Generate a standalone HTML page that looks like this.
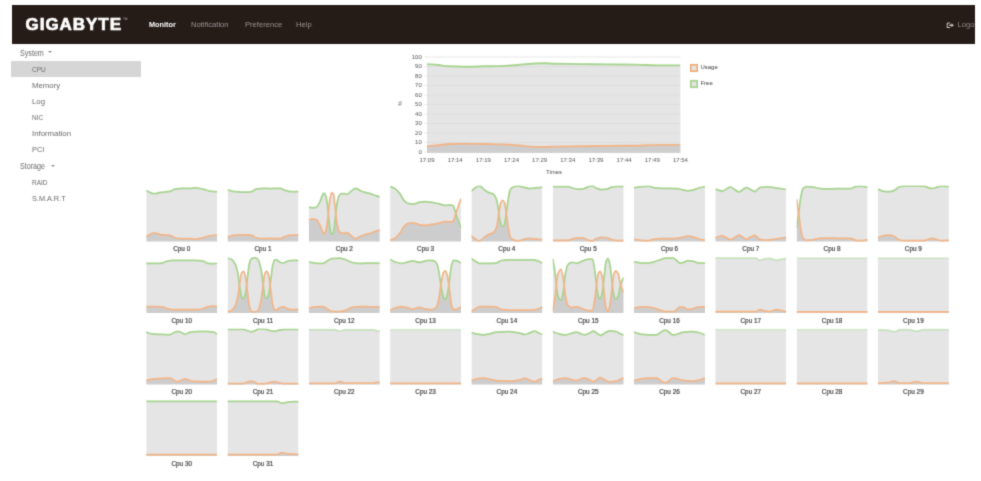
<!DOCTYPE html>
<html><head><meta charset="utf-8">
<style>
html,body{margin:0;padding:0;background:#fff;width:981px;height:481px;overflow:hidden;font-family:"Liberation Sans",sans-serif;}
#hdr{position:absolute;left:12px;top:5px;width:963px;height:39px;background:#251b17;overflow:hidden;}
#logo{position:absolute;left:13.6px;top:9.4px;font-weight:bold;font-size:17px;color:#fff;letter-spacing:0.95px;line-height:22px;-webkit-text-stroke:0.7px #fff;}
#tm{position:absolute;left:110.8px;top:12.2px;font-size:5px;color:#bbb;line-height:5px;}
.nav{position:absolute;top:15.2px;font-size:7.6px;color:#9b9593;line-height:10px;white-space:nowrap;}
.side{position:absolute;font-size:7.8px;color:#6a6a6a;line-height:10px;white-space:nowrap;}
.cat{font-size:8.3px;transform:scaleX(0.86);transform-origin:0 0;}
.arr{position:absolute;width:0;height:0;border-left:2.8px solid transparent;border-right:2.8px solid transparent;border-top:2.6px solid #8c8c8c;}
#sel{position:absolute;left:11px;top:61px;width:130px;height:16px;background:#d6d6d6;}
svg{position:absolute;left:0;top:0;}
#wrap{position:absolute;left:0;top:0;width:981px;height:481px;filter:url(#soft);background:#fff;}
.cl{font-size:6.4px;fill:#4a4a4a;stroke:#4a4a4a;stroke-width:0.22px;}
.al{font-size:6px;fill:#666;stroke:#666;stroke-width:0.05px;}
</style></head><body><svg width="0" height="0" style="position:absolute;left:0;top:0"><filter id="soft" x="0" y="0" width="100%" height="100%" color-interpolation-filters="sRGB"><feConvolveMatrix order="3" kernelMatrix="9 42 9 42 196 42 9 42 9" divisor="400" edgeMode="duplicate"/></filter></svg><div id="wrap">
<div id="hdr">
 <div id="logo">GIGABYTE</div><div id="tm">&#8482;</div>
 <div class="nav" style="left:137px;color:#fff;font-weight:bold;font-size:7.3px">Monitor</div>
 <div class="nav" style="left:179px">Notification</div>
 <div class="nav" style="left:233px">Preference</div>
 <div class="nav" style="left:284px">Help</div>
 <svg style="position:absolute;left:933.5px;top:16.5px" width="9" height="6.5" viewBox="0 0 10 8"><path d="M1,1.2 H4.5 M1,1.2 V6.8 H4.5" stroke="#c4c0be" stroke-width="1.3" fill="none"/><path d="M3.5,3.2 H6.2 V1.6 L9.2,4 L6.2,6.4 V4.8 H3.5 Z" fill="#c4c0be"/></svg>
 <div class="nav" style="top:15px;left:945.5px;color:#8f8a88;white-space:nowrap">Logout</div>
</div>
<div id="sel"></div>
<div class="side cat" style="left:19.8px;top:48.2px">System</div><div class="arr" style="left:48.3px;top:51px"></div>
<div class="side" style="left:32px;top:65.3px;font-size:8.1px;transform:scaleX(0.8);transform-origin:0 0">CPU</div>
<div class="side" style="left:32px;top:81.3px">Memory</div>
<div class="side" style="left:32px;top:97.3px">Log</div>
<div class="side" style="left:32px;top:113.3px;font-size:8.1px;transform:scaleX(0.8);transform-origin:0 0">NIC</div>
<div class="side" style="left:32px;top:129.3px">Information</div>
<div class="side" style="left:32px;top:145.3px;font-size:8.1px;transform:scaleX(0.92);transform-origin:0 0">PCI</div>
<div class="side cat" style="left:19.8px;top:161.2px">Storage</div><div class="arr" style="left:50.6px;top:164.5px"></div>
<div class="side" style="left:32px;top:178.3px;font-size:8.1px;transform:scaleX(0.8);transform-origin:0 0">RAID</div>
<div class="side" style="left:32px;top:194.3px;font-size:8.1px;transform:scaleX(0.9);transform-origin:0 0">S.M.A.R.T</div>
<svg width="981" height="481" viewBox="0 0 981 481" style="font-family:'Liberation Sans',sans-serif">
<path d="M427.00,64.10 C430.73,64.40 434.47,64.64 438.20,65.00 C441.73,65.34 445.27,66.15 448.80,66.30 C454.10,66.52 459.40,66.70 464.70,66.70 C471.33,66.70 477.97,66.43 484.60,66.30 C491.23,66.17 497.87,66.11 504.50,65.90 C508.90,65.76 513.30,65.35 517.70,65.00 C522.13,64.64 526.57,63.91 531.00,63.70 C535.40,63.50 539.80,63.30 544.20,63.30 C547.80,63.30 551.40,63.62 555.00,63.70 C563.83,63.89 572.67,63.99 581.50,64.10 C590.33,64.21 599.17,64.32 608.00,64.40 C616.83,64.48 625.67,64.49 634.50,64.60 C643.33,64.71 652.17,65.40 661.00,65.40 C667.47,65.40 673.93,65.40 680.40,65.40 L680.40,153.00 L427.00,153.00 Z" fill="#000" fill-opacity="0.1"/>
<path d="M427.00,146.20 C430.73,145.90 434.47,145.66 438.20,145.30 C441.73,144.96 445.27,144.15 448.80,144.00 C454.10,143.78 459.40,143.60 464.70,143.60 C471.33,143.60 477.97,143.87 484.60,144.00 C491.23,144.13 497.87,144.19 504.50,144.40 C508.90,144.54 513.30,144.95 517.70,145.30 C522.13,145.66 526.57,146.39 531.00,146.60 C535.40,146.80 539.80,147.00 544.20,147.00 C547.80,147.00 551.40,146.68 555.00,146.60 C563.83,146.41 572.67,146.31 581.50,146.20 C590.33,146.09 599.17,145.98 608.00,145.90 C616.83,145.82 625.67,145.81 634.50,145.70 C643.33,145.59 652.17,144.90 661.00,144.90 C667.47,144.90 673.93,144.90 680.40,144.90 L680.40,153.00 L427.00,153.00 Z" fill="#000" fill-opacity="0.1"/>
<line x1="427.0" x2="680.4" y1="152.00" y2="152.00" stroke="#d9d9d9" stroke-opacity="0.8" stroke-width="0.8"/>
<line x1="424.0" x2="427.0" y1="152.00" y2="152.00" stroke="#e6e6e6" stroke-width="0.8"/>
<text x="421.8" y="153.80" text-anchor="end" class="al">0</text>
<line x1="427.0" x2="680.4" y1="142.50" y2="142.50" stroke="#d9d9d9" stroke-opacity="0.8" stroke-width="0.8"/>
<line x1="424.0" x2="427.0" y1="142.50" y2="142.50" stroke="#e6e6e6" stroke-width="0.8"/>
<text x="421.8" y="144.30" text-anchor="end" class="al">10</text>
<line x1="427.0" x2="680.4" y1="133.00" y2="133.00" stroke="#d9d9d9" stroke-opacity="0.8" stroke-width="0.8"/>
<line x1="424.0" x2="427.0" y1="133.00" y2="133.00" stroke="#e6e6e6" stroke-width="0.8"/>
<text x="421.8" y="134.80" text-anchor="end" class="al">20</text>
<line x1="427.0" x2="680.4" y1="123.50" y2="123.50" stroke="#d9d9d9" stroke-opacity="0.8" stroke-width="0.8"/>
<line x1="424.0" x2="427.0" y1="123.50" y2="123.50" stroke="#e6e6e6" stroke-width="0.8"/>
<text x="421.8" y="125.30" text-anchor="end" class="al">30</text>
<line x1="427.0" x2="680.4" y1="114.00" y2="114.00" stroke="#d9d9d9" stroke-opacity="0.8" stroke-width="0.8"/>
<line x1="424.0" x2="427.0" y1="114.00" y2="114.00" stroke="#e6e6e6" stroke-width="0.8"/>
<text x="421.8" y="115.80" text-anchor="end" class="al">40</text>
<line x1="427.0" x2="680.4" y1="104.50" y2="104.50" stroke="#d9d9d9" stroke-opacity="0.8" stroke-width="0.8"/>
<line x1="424.0" x2="427.0" y1="104.50" y2="104.50" stroke="#e6e6e6" stroke-width="0.8"/>
<text x="421.8" y="106.30" text-anchor="end" class="al">50</text>
<line x1="427.0" x2="680.4" y1="95.00" y2="95.00" stroke="#d9d9d9" stroke-opacity="0.8" stroke-width="0.8"/>
<line x1="424.0" x2="427.0" y1="95.00" y2="95.00" stroke="#e6e6e6" stroke-width="0.8"/>
<text x="421.8" y="96.80" text-anchor="end" class="al">60</text>
<line x1="427.0" x2="680.4" y1="85.50" y2="85.50" stroke="#d9d9d9" stroke-opacity="0.8" stroke-width="0.8"/>
<line x1="424.0" x2="427.0" y1="85.50" y2="85.50" stroke="#e6e6e6" stroke-width="0.8"/>
<text x="421.8" y="87.30" text-anchor="end" class="al">70</text>
<line x1="427.0" x2="680.4" y1="76.00" y2="76.00" stroke="#d9d9d9" stroke-opacity="0.8" stroke-width="0.8"/>
<line x1="424.0" x2="427.0" y1="76.00" y2="76.00" stroke="#e6e6e6" stroke-width="0.8"/>
<text x="421.8" y="77.80" text-anchor="end" class="al">80</text>
<line x1="427.0" x2="680.4" y1="66.50" y2="66.50" stroke="#d9d9d9" stroke-opacity="0.8" stroke-width="0.8"/>
<line x1="424.0" x2="427.0" y1="66.50" y2="66.50" stroke="#e6e6e6" stroke-width="0.8"/>
<text x="421.8" y="68.30" text-anchor="end" class="al">90</text>
<line x1="427.0" x2="680.4" y1="57.00" y2="57.00" stroke="#d9d9d9" stroke-opacity="0.8" stroke-width="0.8"/>
<line x1="424.0" x2="427.0" y1="57.00" y2="57.00" stroke="#e6e6e6" stroke-width="0.8"/>
<text x="421.8" y="58.80" text-anchor="end" class="al">100</text>
<text x="427.00" y="161.8" text-anchor="middle" class="al">17:09</text>
<text x="455.16" y="161.8" text-anchor="middle" class="al">17:14</text>
<text x="483.31" y="161.8" text-anchor="middle" class="al">17:19</text>
<text x="511.47" y="161.8" text-anchor="middle" class="al">17:24</text>
<text x="539.62" y="161.8" text-anchor="middle" class="al">17:29</text>
<text x="567.78" y="161.8" text-anchor="middle" class="al">17:34</text>
<text x="595.93" y="161.8" text-anchor="middle" class="al">17:39</text>
<text x="624.09" y="161.8" text-anchor="middle" class="al">17:44</text>
<text x="652.24" y="161.8" text-anchor="middle" class="al">17:49</text>
<text x="680.40" y="161.8" text-anchor="middle" class="al">17:54</text>
<clipPath id="bigc"><rect x="427.00" y="54.00" width="253.40" height="102.00"/></clipPath>
<g clip-path="url(#bigc)"><path d="M427.00,64.10 C430.73,64.40 434.47,64.64 438.20,65.00 C441.73,65.34 445.27,66.15 448.80,66.30 C454.10,66.52 459.40,66.70 464.70,66.70 C471.33,66.70 477.97,66.43 484.60,66.30 C491.23,66.17 497.87,66.11 504.50,65.90 C508.90,65.76 513.30,65.35 517.70,65.00 C522.13,64.64 526.57,63.91 531.00,63.70 C535.40,63.50 539.80,63.30 544.20,63.30 C547.80,63.30 551.40,63.62 555.00,63.70 C563.83,63.89 572.67,63.99 581.50,64.10 C590.33,64.21 599.17,64.32 608.00,64.40 C616.83,64.48 625.67,64.49 634.50,64.60 C643.33,64.71 652.17,65.40 661.00,65.40 C667.47,65.40 673.93,65.40 680.40,65.40" fill="none" stroke="#a6d48f" stroke-width="1.9"/>
<path d="M427.00,146.20 C430.73,145.90 434.47,145.66 438.20,145.30 C441.73,144.96 445.27,144.15 448.80,144.00 C454.10,143.78 459.40,143.60 464.70,143.60 C471.33,143.60 477.97,143.87 484.60,144.00 C491.23,144.13 497.87,144.19 504.50,144.40 C508.90,144.54 513.30,144.95 517.70,145.30 C522.13,145.66 526.57,146.39 531.00,146.60 C535.40,146.80 539.80,147.00 544.20,147.00 C547.80,147.00 551.40,146.68 555.00,146.60 C563.83,146.41 572.67,146.31 581.50,146.20 C590.33,146.09 599.17,145.98 608.00,145.90 C616.83,145.82 625.67,145.81 634.50,145.70 C643.33,145.59 652.17,144.90 661.00,144.90 C667.47,144.90 673.93,144.90 680.40,144.90" fill="none" stroke="#f2b588" stroke-width="1.9"/></g>
<text x="554" y="174" text-anchor="middle" class="al">Times</text>
<text x="0" y="0" text-anchor="middle" class="al" style="font-size:5px" transform="translate(402.2,103.3) rotate(-90)">%</text>
<rect x="690.8" y="64.8" width="6.4" height="6.4" fill="#e4e4e4" stroke="#f0a874" stroke-width="1.6"/>
<text x="700.4" y="69.4" class="al" style="fill:#555">Usage</text>
<rect x="690.8" y="80.8" width="6.4" height="6.4" fill="#e4e4e4" stroke="#a6d48f" stroke-width="1.75"/>
<text x="700.4" y="85.4" class="al" style="fill:#555">Free</text>
<clipPath id="c0"><rect x="146.20" y="185.50" width="71.00" height="57.40"/></clipPath>
<g clip-path="url(#c0)">
<path d="M146.20,190.44 C148.60,191.52 151.00,193.66 153.40,193.66 C154.56,193.66 155.72,193.54 156.88,193.41 C158.08,193.26 159.29,192.54 160.49,192.37 C162.85,192.05 165.21,192.02 167.57,191.73 C168.73,191.59 169.89,191.41 171.05,191.09 C172.25,190.76 173.46,189.40 174.66,189.15 C177.02,188.67 179.38,188.25 181.74,188.25 C184.10,188.25 186.47,188.25 188.83,188.25 C191.19,188.25 193.55,187.87 195.91,187.87 C198.27,187.87 200.64,188.64 203.00,189.15 C205.32,189.66 207.63,190.77 209.95,191.09 C212.37,191.41 214.78,191.52 217.20,191.73 L217.20,241.40 L146.20,241.40 Z" fill="#000" fill-opacity="0.1"/>
<path d="M146.20,236.46 C148.60,235.38 151.00,233.24 153.40,233.24 C154.56,233.24 155.72,233.36 156.88,233.49 C158.08,233.64 159.29,234.36 160.49,234.53 C162.85,234.85 165.21,234.88 167.57,235.17 C168.73,235.31 169.89,235.49 171.05,235.81 C172.25,236.14 173.46,237.50 174.66,237.75 C177.02,238.23 179.38,238.65 181.74,238.65 C184.10,238.65 186.47,238.65 188.83,238.65 C191.19,238.65 193.55,239.03 195.91,239.03 C198.27,239.03 200.64,238.26 203.00,237.75 C205.32,237.24 207.63,236.13 209.95,235.81 C212.37,235.49 214.78,235.38 217.20,235.17 L217.20,241.40 L146.20,241.40 Z" fill="#000" fill-opacity="0.1"/>
<path d="M146.20,190.44 C148.60,191.52 151.00,193.66 153.40,193.66 C154.56,193.66 155.72,193.54 156.88,193.41 C158.08,193.26 159.29,192.54 160.49,192.37 C162.85,192.05 165.21,192.02 167.57,191.73 C168.73,191.59 169.89,191.41 171.05,191.09 C172.25,190.76 173.46,189.40 174.66,189.15 C177.02,188.67 179.38,188.25 181.74,188.25 C184.10,188.25 186.47,188.25 188.83,188.25 C191.19,188.25 193.55,187.87 195.91,187.87 C198.27,187.87 200.64,188.64 203.00,189.15 C205.32,189.66 207.63,190.77 209.95,191.09 C212.37,191.41 214.78,191.52 217.20,191.73" fill="none" stroke="#a6d48f" stroke-width="1.75" stroke-opacity="1.00"/>
<path d="M146.20,236.46 C148.60,235.38 151.00,233.24 153.40,233.24 C154.56,233.24 155.72,233.36 156.88,233.49 C158.08,233.64 159.29,234.36 160.49,234.53 C162.85,234.85 165.21,234.88 167.57,235.17 C168.73,235.31 169.89,235.49 171.05,235.81 C172.25,236.14 173.46,237.50 174.66,237.75 C177.02,238.23 179.38,238.65 181.74,238.65 C184.10,238.65 186.47,238.65 188.83,238.65 C191.19,238.65 193.55,239.03 195.91,239.03 C198.27,239.03 200.64,238.26 203.00,237.75 C205.32,237.24 207.63,236.13 209.95,235.81 C212.37,235.49 214.78,235.38 217.20,235.17" fill="none" stroke="#f2b588" stroke-width="1.75"/>
</g>
<text x="181.7" y="251.0" text-anchor="middle" class="cl">Cpu 0</text>
<clipPath id="c1"><rect x="227.50" y="185.50" width="71.00" height="57.40"/></clipPath>
<g clip-path="url(#c1)">
<path d="M227.50,189.80 C229.89,190.44 232.27,191.51 234.66,191.73 C237.02,191.94 239.38,192.12 241.75,192.12 C244.11,192.12 246.47,192.12 248.83,192.12 C249.99,192.12 251.15,191.72 252.31,191.34 C253.51,190.95 254.71,189.41 255.92,189.15 C258.28,188.66 260.64,188.25 263.00,188.25 C265.36,188.25 267.72,188.51 270.08,188.51 C272.45,188.51 274.81,188.25 277.17,188.25 C278.33,188.25 279.49,188.25 280.65,188.25 C281.85,188.25 283.05,189.67 284.25,190.06 C286.62,190.81 288.98,191.73 291.34,191.73 C293.73,191.73 296.11,191.73 298.50,191.73 L298.50,241.40 L227.50,241.40 Z" fill="#000" fill-opacity="0.1"/>
<path d="M227.50,237.10 C229.89,236.46 232.27,235.39 234.66,235.17 C237.02,234.96 239.38,234.78 241.75,234.78 C244.11,234.78 246.47,234.78 248.83,234.78 C249.99,234.78 251.15,235.18 252.31,235.56 C253.51,235.95 254.71,237.49 255.92,237.75 C258.28,238.24 260.64,238.65 263.00,238.65 C265.36,238.65 267.72,238.39 270.08,238.39 C272.45,238.39 274.81,238.65 277.17,238.65 C278.33,238.65 279.49,238.65 280.65,238.65 C281.85,238.65 283.05,237.23 284.25,236.84 C286.62,236.09 288.98,235.17 291.34,235.17 C293.73,235.17 296.11,235.17 298.50,235.17 L298.50,241.40 L227.50,241.40 Z" fill="#000" fill-opacity="0.1"/>
<path d="M227.50,189.80 C229.89,190.44 232.27,191.51 234.66,191.73 C237.02,191.94 239.38,192.12 241.75,192.12 C244.11,192.12 246.47,192.12 248.83,192.12 C249.99,192.12 251.15,191.72 252.31,191.34 C253.51,190.95 254.71,189.41 255.92,189.15 C258.28,188.66 260.64,188.25 263.00,188.25 C265.36,188.25 267.72,188.51 270.08,188.51 C272.45,188.51 274.81,188.25 277.17,188.25 C278.33,188.25 279.49,188.25 280.65,188.25 C281.85,188.25 283.05,189.67 284.25,190.06 C286.62,190.81 288.98,191.73 291.34,191.73 C293.73,191.73 296.11,191.73 298.50,191.73" fill="none" stroke="#a6d48f" stroke-width="1.75" stroke-opacity="1.00"/>
<path d="M227.50,237.10 C229.89,236.46 232.27,235.39 234.66,235.17 C237.02,234.96 239.38,234.78 241.75,234.78 C244.11,234.78 246.47,234.78 248.83,234.78 C249.99,234.78 251.15,235.18 252.31,235.56 C253.51,235.95 254.71,237.49 255.92,237.75 C258.28,238.24 260.64,238.65 263.00,238.65 C265.36,238.65 267.72,238.39 270.08,238.39 C272.45,238.39 274.81,238.65 277.17,238.65 C278.33,238.65 279.49,238.65 280.65,238.65 C281.85,238.65 283.05,237.23 284.25,236.84 C286.62,236.09 288.98,235.17 291.34,235.17 C293.73,235.17 296.11,235.17 298.50,235.17" fill="none" stroke="#f2b588" stroke-width="1.75"/>
</g>
<text x="263.0" y="251.0" text-anchor="middle" class="cl">Cpu 1</text>
<clipPath id="c2"><rect x="308.80" y="185.50" width="71.00" height="57.40"/></clipPath>
<g clip-path="url(#c2)">
<path d="M308.80,207.19 C310.01,207.40 311.23,207.83 312.44,207.83 C313.73,207.83 315.02,207.57 316.31,207.19 C317.38,206.87 318.45,204.61 319.53,202.68 C320.38,201.14 321.24,197.96 322.10,196.24 C322.75,194.95 323.39,193.02 324.03,193.02 C324.68,193.02 325.32,194.52 325.97,196.24 C326.61,197.96 327.25,204.11 327.90,209.12 C328.54,214.13 329.19,223.76 329.83,227.15 C330.47,230.55 331.12,234.24 331.76,234.24 C332.32,234.24 332.88,233.73 333.44,232.95 C333.95,232.23 334.47,224.98 334.98,220.71 C335.63,215.38 336.27,207.49 336.92,203.97 C337.56,200.44 338.20,197.27 338.85,196.24 C339.71,194.86 340.56,193.66 341.42,193.66 C342.50,193.66 343.57,193.66 344.64,193.66 C345.50,193.66 346.36,194.31 347.22,194.31 C348.51,194.31 349.80,192.01 351.08,191.09 C352.59,190.01 354.09,188.25 355.59,188.25 C357.10,188.25 358.60,189.81 360.10,190.44 C361.82,191.17 363.54,191.86 365.25,192.37 C366.97,192.89 368.69,193.15 370.41,193.66 C372.12,194.18 373.84,195.02 375.56,195.59 C376.97,196.07 378.39,196.45 379.80,196.88 L379.80,241.40 L308.80,241.40 Z" fill="#000" fill-opacity="0.1"/>
<path d="M308.80,219.71 C310.01,219.50 311.23,219.07 312.44,219.07 C313.73,219.07 315.02,219.33 316.31,219.71 C317.38,220.03 318.45,222.29 319.53,224.22 C320.38,225.76 321.24,228.94 322.10,230.66 C322.75,231.95 323.39,233.88 324.03,233.88 C324.68,233.88 325.32,232.38 325.97,230.66 C326.61,228.94 327.25,222.79 327.90,217.78 C328.54,212.77 329.19,203.14 329.83,199.75 C330.47,196.35 331.12,192.66 331.76,192.66 C332.32,192.66 332.88,193.17 333.44,193.95 C333.95,194.67 334.47,201.92 334.98,206.19 C335.63,211.52 336.27,219.41 336.92,222.93 C337.56,226.46 338.20,229.63 338.85,230.66 C339.71,232.04 340.56,233.24 341.42,233.24 C342.50,233.24 343.57,233.24 344.64,233.24 C345.50,233.24 346.36,232.59 347.22,232.59 C348.51,232.59 349.80,234.89 351.08,235.81 C352.59,236.89 354.09,238.65 355.59,238.65 C357.10,238.65 358.60,237.09 360.10,236.46 C361.82,235.73 363.54,235.04 365.25,234.53 C366.97,234.01 368.69,233.75 370.41,233.24 C372.12,232.72 373.84,231.88 375.56,231.31 C376.97,230.83 378.39,230.45 379.80,230.02 L379.80,241.40 L308.80,241.40 Z" fill="#000" fill-opacity="0.1"/>
<path d="M308.80,207.19 C310.01,207.40 311.23,207.83 312.44,207.83 C313.73,207.83 315.02,207.57 316.31,207.19 C317.38,206.87 318.45,204.61 319.53,202.68 C320.38,201.14 321.24,197.96 322.10,196.24 C322.75,194.95 323.39,193.02 324.03,193.02 C324.68,193.02 325.32,194.52 325.97,196.24 C326.61,197.96 327.25,204.11 327.90,209.12 C328.54,214.13 329.19,223.76 329.83,227.15 C330.47,230.55 331.12,234.24 331.76,234.24 C332.32,234.24 332.88,233.73 333.44,232.95 C333.95,232.23 334.47,224.98 334.98,220.71 C335.63,215.38 336.27,207.49 336.92,203.97 C337.56,200.44 338.20,197.27 338.85,196.24 C339.71,194.86 340.56,193.66 341.42,193.66 C342.50,193.66 343.57,193.66 344.64,193.66 C345.50,193.66 346.36,194.31 347.22,194.31 C348.51,194.31 349.80,192.01 351.08,191.09 C352.59,190.01 354.09,188.25 355.59,188.25 C357.10,188.25 358.60,189.81 360.10,190.44 C361.82,191.17 363.54,191.86 365.25,192.37 C366.97,192.89 368.69,193.15 370.41,193.66 C372.12,194.18 373.84,195.02 375.56,195.59 C376.97,196.07 378.39,196.45 379.80,196.88" fill="none" stroke="#a6d48f" stroke-width="1.75" stroke-opacity="1.00"/>
<path d="M308.80,219.71 C310.01,219.50 311.23,219.07 312.44,219.07 C313.73,219.07 315.02,219.33 316.31,219.71 C317.38,220.03 318.45,222.29 319.53,224.22 C320.38,225.76 321.24,228.94 322.10,230.66 C322.75,231.95 323.39,233.88 324.03,233.88 C324.68,233.88 325.32,232.38 325.97,230.66 C326.61,228.94 327.25,222.79 327.90,217.78 C328.54,212.77 329.19,203.14 329.83,199.75 C330.47,196.35 331.12,192.66 331.76,192.66 C332.32,192.66 332.88,193.17 333.44,193.95 C333.95,194.67 334.47,201.92 334.98,206.19 C335.63,211.52 336.27,219.41 336.92,222.93 C337.56,226.46 338.20,229.63 338.85,230.66 C339.71,232.04 340.56,233.24 341.42,233.24 C342.50,233.24 343.57,233.24 344.64,233.24 C345.50,233.24 346.36,232.59 347.22,232.59 C348.51,232.59 349.80,234.89 351.08,235.81 C352.59,236.89 354.09,238.65 355.59,238.65 C357.10,238.65 358.60,237.09 360.10,236.46 C361.82,235.73 363.54,235.04 365.25,234.53 C366.97,234.01 368.69,233.75 370.41,233.24 C372.12,232.72 373.84,231.88 375.56,231.31 C376.97,230.83 378.39,230.45 379.80,230.02" fill="none" stroke="#f2b588" stroke-width="1.75"/>
</g>
<text x="344.3" y="251.0" text-anchor="middle" class="cl">Cpu 2</text>
<clipPath id="c3"><rect x="390.10" y="185.50" width="71.00" height="57.40"/></clipPath>
<g clip-path="url(#c3)">
<path d="M390.10,186.58 C391.64,187.22 393.19,187.60 394.73,188.51 C396.45,189.52 398.16,191.52 399.88,193.66 C401.17,195.27 402.46,198.67 403.75,200.10 C405.03,201.53 406.32,203.04 407.61,203.32 C409.33,203.70 411.05,203.97 412.76,203.97 C414.05,203.97 415.34,203.65 416.63,203.32 C417.49,203.11 418.34,202.13 419.20,202.04 C421.35,201.81 423.50,201.65 425.64,201.65 C427.79,201.65 429.94,202.10 432.08,202.42 C434.23,202.74 436.38,203.24 438.53,203.71 C440.67,204.18 442.82,205.26 444.97,205.26 C447.11,205.26 449.26,205.00 451.41,205.00 C452.05,205.00 452.69,205.38 453.34,205.90 C453.98,206.42 454.63,209.76 455.27,211.70 C456.13,214.27 456.99,216.95 457.85,219.43 C458.93,222.55 460.02,225.44 461.10,228.44 L461.10,241.40 L390.10,241.40 Z" fill="#000" fill-opacity="0.1"/>
<path d="M390.10,240.32 C391.64,239.68 393.19,239.30 394.73,238.39 C396.45,237.38 398.16,235.38 399.88,233.24 C401.17,231.63 402.46,228.23 403.75,226.80 C405.03,225.37 406.32,223.86 407.61,223.58 C409.33,223.20 411.05,222.93 412.76,222.93 C414.05,222.93 415.34,223.25 416.63,223.58 C417.49,223.79 418.34,224.77 419.20,224.86 C421.35,225.09 423.50,225.25 425.64,225.25 C427.79,225.25 429.94,224.80 432.08,224.48 C434.23,224.16 436.38,223.66 438.53,223.19 C440.67,222.72 442.82,221.64 444.97,221.64 C447.11,221.64 449.26,221.90 451.41,221.90 C452.05,221.90 452.69,221.52 453.34,221.00 C453.98,220.48 454.63,217.14 455.27,215.20 C456.13,212.63 456.99,209.95 457.85,207.47 C458.93,204.35 460.02,201.46 461.10,198.46 L461.10,241.40 L390.10,241.40 Z" fill="#000" fill-opacity="0.1"/>
<path d="M390.10,186.58 C391.64,187.22 393.19,187.60 394.73,188.51 C396.45,189.52 398.16,191.52 399.88,193.66 C401.17,195.27 402.46,198.67 403.75,200.10 C405.03,201.53 406.32,203.04 407.61,203.32 C409.33,203.70 411.05,203.97 412.76,203.97 C414.05,203.97 415.34,203.65 416.63,203.32 C417.49,203.11 418.34,202.13 419.20,202.04 C421.35,201.81 423.50,201.65 425.64,201.65 C427.79,201.65 429.94,202.10 432.08,202.42 C434.23,202.74 436.38,203.24 438.53,203.71 C440.67,204.18 442.82,205.26 444.97,205.26 C447.11,205.26 449.26,205.00 451.41,205.00 C452.05,205.00 452.69,205.38 453.34,205.90 C453.98,206.42 454.63,209.76 455.27,211.70 C456.13,214.27 456.99,216.95 457.85,219.43 C458.93,222.55 460.02,225.44 461.10,228.44" fill="none" stroke="#a6d48f" stroke-width="1.75" stroke-opacity="1.00"/>
<path d="M390.10,240.32 C391.64,239.68 393.19,239.30 394.73,238.39 C396.45,237.38 398.16,235.38 399.88,233.24 C401.17,231.63 402.46,228.23 403.75,226.80 C405.03,225.37 406.32,223.86 407.61,223.58 C409.33,223.20 411.05,222.93 412.76,222.93 C414.05,222.93 415.34,223.25 416.63,223.58 C417.49,223.79 418.34,224.77 419.20,224.86 C421.35,225.09 423.50,225.25 425.64,225.25 C427.79,225.25 429.94,224.80 432.08,224.48 C434.23,224.16 436.38,223.66 438.53,223.19 C440.67,222.72 442.82,221.64 444.97,221.64 C447.11,221.64 449.26,221.90 451.41,221.90 C452.05,221.90 452.69,221.52 453.34,221.00 C453.98,220.48 454.63,217.14 455.27,215.20 C456.13,212.63 456.99,209.95 457.85,207.47 C458.93,204.35 460.02,201.46 461.10,198.46" fill="none" stroke="#f2b588" stroke-width="1.75"/>
</g>
<text x="425.6" y="251.0" text-anchor="middle" class="cl">Cpu 3</text>
<clipPath id="c4"><rect x="471.40" y="185.50" width="71.00" height="57.40"/></clipPath>
<g clip-path="url(#c4)">
<path d="M471.40,191.09 C472.75,190.01 474.09,188.69 475.44,187.87 C476.73,187.07 478.02,185.93 479.31,185.93 C481.02,185.93 482.74,188.59 484.46,189.80 C485.75,190.71 487.03,191.76 488.32,192.37 C490.04,193.20 491.76,193.24 493.47,194.31 C494.55,194.97 495.62,197.13 496.69,200.10 C497.34,201.89 497.98,207.83 498.63,211.70 C499.27,215.56 499.92,221.61 500.56,223.29 C501.20,224.97 501.85,226.51 502.49,226.51 C503.14,226.51 503.78,225.68 504.42,224.58 C505.07,223.47 505.71,217.24 506.36,212.98 C507.00,208.73 507.64,202.49 508.29,198.82 C508.93,195.14 509.58,190.86 510.22,189.80 C511.08,188.38 511.94,187.57 512.80,187.22 C514.51,186.54 516.23,185.93 517.95,185.93 C519.67,185.93 521.38,186.84 523.10,187.22 C525.25,187.70 527.40,188.51 529.54,188.51 C531.69,188.51 533.84,188.08 535.98,187.87 C538.12,187.65 540.26,187.44 542.40,187.22 L542.40,241.40 L471.40,241.40 Z" fill="#000" fill-opacity="0.1"/>
<path d="M471.40,235.81 C472.75,236.89 474.09,238.21 475.44,239.03 C476.73,239.83 478.02,240.97 479.31,240.97 C481.02,240.97 482.74,238.31 484.46,237.10 C485.75,236.19 487.03,235.14 488.32,234.53 C490.04,233.70 491.76,233.66 493.47,232.59 C494.55,231.93 495.62,229.77 496.69,226.80 C497.34,225.01 497.98,219.07 498.63,215.20 C499.27,211.34 499.92,205.29 500.56,203.61 C501.20,201.93 501.85,200.39 502.49,200.39 C503.14,200.39 503.78,201.22 504.42,202.32 C505.07,203.43 505.71,209.66 506.36,213.92 C507.00,218.17 507.64,224.41 508.29,228.08 C508.93,231.76 509.58,236.04 510.22,237.10 C511.08,238.52 511.94,239.33 512.80,239.68 C514.51,240.36 516.23,240.97 517.95,240.97 C519.67,240.97 521.38,240.06 523.10,239.68 C525.25,239.20 527.40,238.39 529.54,238.39 C531.69,238.39 533.84,238.82 535.98,239.03 C538.12,239.25 540.26,239.46 542.40,239.68 L542.40,241.40 L471.40,241.40 Z" fill="#000" fill-opacity="0.1"/>
<path d="M471.40,191.09 C472.75,190.01 474.09,188.69 475.44,187.87 C476.73,187.07 478.02,185.93 479.31,185.93 C481.02,185.93 482.74,188.59 484.46,189.80 C485.75,190.71 487.03,191.76 488.32,192.37 C490.04,193.20 491.76,193.24 493.47,194.31 C494.55,194.97 495.62,197.13 496.69,200.10 C497.34,201.89 497.98,207.83 498.63,211.70 C499.27,215.56 499.92,221.61 500.56,223.29 C501.20,224.97 501.85,226.51 502.49,226.51 C503.14,226.51 503.78,225.68 504.42,224.58 C505.07,223.47 505.71,217.24 506.36,212.98 C507.00,208.73 507.64,202.49 508.29,198.82 C508.93,195.14 509.58,190.86 510.22,189.80 C511.08,188.38 511.94,187.57 512.80,187.22 C514.51,186.54 516.23,185.93 517.95,185.93 C519.67,185.93 521.38,186.84 523.10,187.22 C525.25,187.70 527.40,188.51 529.54,188.51 C531.69,188.51 533.84,188.08 535.98,187.87 C538.12,187.65 540.26,187.44 542.40,187.22" fill="none" stroke="#a6d48f" stroke-width="1.75" stroke-opacity="1.00"/>
<path d="M471.40,235.81 C472.75,236.89 474.09,238.21 475.44,239.03 C476.73,239.83 478.02,240.97 479.31,240.97 C481.02,240.97 482.74,238.31 484.46,237.10 C485.75,236.19 487.03,235.14 488.32,234.53 C490.04,233.70 491.76,233.66 493.47,232.59 C494.55,231.93 495.62,229.77 496.69,226.80 C497.34,225.01 497.98,219.07 498.63,215.20 C499.27,211.34 499.92,205.29 500.56,203.61 C501.20,201.93 501.85,200.39 502.49,200.39 C503.14,200.39 503.78,201.22 504.42,202.32 C505.07,203.43 505.71,209.66 506.36,213.92 C507.00,218.17 507.64,224.41 508.29,228.08 C508.93,231.76 509.58,236.04 510.22,237.10 C511.08,238.52 511.94,239.33 512.80,239.68 C514.51,240.36 516.23,240.97 517.95,240.97 C519.67,240.97 521.38,240.06 523.10,239.68 C525.25,239.20 527.40,238.39 529.54,238.39 C531.69,238.39 533.84,238.82 535.98,239.03 C538.12,239.25 540.26,239.46 542.40,239.68" fill="none" stroke="#f2b588" stroke-width="1.75"/>
</g>
<text x="506.9" y="251.0" text-anchor="middle" class="cl">Cpu 4</text>
<clipPath id="c5"><rect x="552.70" y="185.50" width="71.00" height="57.40"/></clipPath>
<g clip-path="url(#c5)">
<path d="M552.70,186.58 C555.24,186.58 557.77,186.58 560.31,186.58 C562.88,186.58 565.46,186.58 568.03,186.58 C569.75,186.58 571.47,187.86 573.19,188.25 C574.90,188.64 576.62,189.15 578.34,189.15 C580.06,189.15 581.77,188.99 583.49,188.77 C585.21,188.55 586.93,186.99 588.64,186.58 C589.93,186.27 591.22,185.93 592.51,185.93 C593.80,185.93 595.08,187.80 596.37,188.25 C598.09,188.86 599.81,189.54 601.53,189.54 C603.24,189.54 604.96,189.37 606.68,189.15 C608.40,188.94 610.11,187.63 611.83,187.22 C613.55,186.81 615.27,186.32 616.98,186.32 C619.22,186.32 621.46,186.32 623.70,186.32 L623.70,241.40 L552.70,241.40 Z" fill="#000" fill-opacity="0.1"/>
<path d="M552.70,240.32 C555.24,240.32 557.77,240.32 560.31,240.32 C562.88,240.32 565.46,240.32 568.03,240.32 C569.75,240.32 571.47,239.04 573.19,238.65 C574.90,238.26 576.62,237.75 578.34,237.75 C580.06,237.75 581.77,237.91 583.49,238.13 C585.21,238.35 586.93,239.91 588.64,240.32 C589.93,240.63 591.22,240.97 592.51,240.97 C593.80,240.97 595.08,239.10 596.37,238.65 C598.09,238.04 599.81,237.36 601.53,237.36 C603.24,237.36 604.96,237.53 606.68,237.75 C608.40,237.96 610.11,239.27 611.83,239.68 C613.55,240.09 615.27,240.58 616.98,240.58 C619.22,240.58 621.46,240.58 623.70,240.58 L623.70,241.40 L552.70,241.40 Z" fill="#000" fill-opacity="0.1"/>
<path d="M552.70,186.58 C555.24,186.58 557.77,186.58 560.31,186.58 C562.88,186.58 565.46,186.58 568.03,186.58 C569.75,186.58 571.47,187.86 573.19,188.25 C574.90,188.64 576.62,189.15 578.34,189.15 C580.06,189.15 581.77,188.99 583.49,188.77 C585.21,188.55 586.93,186.99 588.64,186.58 C589.93,186.27 591.22,185.93 592.51,185.93 C593.80,185.93 595.08,187.80 596.37,188.25 C598.09,188.86 599.81,189.54 601.53,189.54 C603.24,189.54 604.96,189.37 606.68,189.15 C608.40,188.94 610.11,187.63 611.83,187.22 C613.55,186.81 615.27,186.32 616.98,186.32 C619.22,186.32 621.46,186.32 623.70,186.32" fill="none" stroke="#a6d48f" stroke-width="1.75" stroke-opacity="1.00"/>
<path d="M552.70,240.32 C555.24,240.32 557.77,240.32 560.31,240.32 C562.88,240.32 565.46,240.32 568.03,240.32 C569.75,240.32 571.47,239.04 573.19,238.65 C574.90,238.26 576.62,237.75 578.34,237.75 C580.06,237.75 581.77,237.91 583.49,238.13 C585.21,238.35 586.93,239.91 588.64,240.32 C589.93,240.63 591.22,240.97 592.51,240.97 C593.80,240.97 595.08,239.10 596.37,238.65 C598.09,238.04 599.81,237.36 601.53,237.36 C603.24,237.36 604.96,237.53 606.68,237.75 C608.40,237.96 610.11,239.27 611.83,239.68 C613.55,240.09 615.27,240.58 616.98,240.58 C619.22,240.58 621.46,240.58 623.70,240.58" fill="none" stroke="#f2b588" stroke-width="1.75"/>
</g>
<text x="588.2" y="251.0" text-anchor="middle" class="cl">Cpu 5</text>
<clipPath id="c6"><rect x="634.00" y="185.50" width="71.00" height="57.40"/></clipPath>
<g clip-path="url(#c6)">
<path d="M634.00,187.87 C636.44,187.44 638.87,186.77 641.31,186.58 C643.88,186.38 646.46,186.19 649.03,186.19 C650.75,186.19 652.47,187.72 654.19,187.87 C656.76,188.09 659.34,188.25 661.92,188.25 C664.49,188.25 667.07,188.25 669.64,188.25 C672.22,188.25 674.80,188.36 677.37,188.51 C679.09,188.61 680.81,189.42 682.53,189.80 C684.24,190.18 685.96,190.83 687.68,190.83 C689.40,190.83 691.11,190.41 692.83,190.06 C694.98,189.61 697.12,188.45 699.27,187.87 C701.18,187.35 703.09,187.01 705.00,186.58 L705.00,241.40 L634.00,241.40 Z" fill="#000" fill-opacity="0.1"/>
<path d="M634.00,239.03 C636.44,239.46 638.87,240.13 641.31,240.32 C643.88,240.52 646.46,240.71 649.03,240.71 C650.75,240.71 652.47,239.18 654.19,239.03 C656.76,238.81 659.34,238.65 661.92,238.65 C664.49,238.65 667.07,238.65 669.64,238.65 C672.22,238.65 674.80,238.54 677.37,238.39 C679.09,238.29 680.81,237.48 682.53,237.10 C684.24,236.72 685.96,236.07 687.68,236.07 C689.40,236.07 691.11,236.49 692.83,236.84 C694.98,237.29 697.12,238.45 699.27,239.03 C701.18,239.55 703.09,239.89 705.00,240.32 L705.00,241.40 L634.00,241.40 Z" fill="#000" fill-opacity="0.1"/>
<path d="M634.00,187.87 C636.44,187.44 638.87,186.77 641.31,186.58 C643.88,186.38 646.46,186.19 649.03,186.19 C650.75,186.19 652.47,187.72 654.19,187.87 C656.76,188.09 659.34,188.25 661.92,188.25 C664.49,188.25 667.07,188.25 669.64,188.25 C672.22,188.25 674.80,188.36 677.37,188.51 C679.09,188.61 680.81,189.42 682.53,189.80 C684.24,190.18 685.96,190.83 687.68,190.83 C689.40,190.83 691.11,190.41 692.83,190.06 C694.98,189.61 697.12,188.45 699.27,187.87 C701.18,187.35 703.09,187.01 705.00,186.58" fill="none" stroke="#a6d48f" stroke-width="1.75" stroke-opacity="1.00"/>
<path d="M634.00,239.03 C636.44,239.46 638.87,240.13 641.31,240.32 C643.88,240.52 646.46,240.71 649.03,240.71 C650.75,240.71 652.47,239.18 654.19,239.03 C656.76,238.81 659.34,238.65 661.92,238.65 C664.49,238.65 667.07,238.65 669.64,238.65 C672.22,238.65 674.80,238.54 677.37,238.39 C679.09,238.29 680.81,237.48 682.53,237.10 C684.24,236.72 685.96,236.07 687.68,236.07 C689.40,236.07 691.11,236.49 692.83,236.84 C694.98,237.29 697.12,238.45 699.27,239.03 C701.18,239.55 703.09,239.89 705.00,240.32" fill="none" stroke="#f2b588" stroke-width="1.75"/>
</g>
<text x="669.5" y="251.0" text-anchor="middle" class="cl">Cpu 6</text>
<clipPath id="c7"><rect x="715.30" y="185.50" width="71.00" height="57.40"/></clipPath>
<g clip-path="url(#c7)">
<path d="M715.30,189.10 C717.63,189.77 719.97,191.10 722.30,191.10 C724.97,191.10 727.63,187.20 730.30,187.20 C733.20,187.20 736.10,191.90 739.00,191.90 C741.40,191.90 743.80,187.60 746.20,187.60 C749.10,187.60 752.00,191.50 754.90,191.50 C756.50,191.50 758.10,187.89 759.70,187.60 C762.33,187.13 764.97,186.80 767.60,186.80 C770.27,186.80 772.93,187.52 775.60,187.90 C779.17,188.41 782.73,188.97 786.30,189.50 L786.30,241.40 L715.30,241.40 Z" fill="#000" fill-opacity="0.1"/>
<path d="M715.30,237.80 C717.63,237.13 719.97,235.80 722.30,235.80 C724.97,235.80 727.63,239.70 730.30,239.70 C733.20,239.70 736.10,235.00 739.00,235.00 C741.40,235.00 743.80,239.30 746.20,239.30 C749.10,239.30 752.00,235.40 754.90,235.40 C756.50,235.40 758.10,239.01 759.70,239.30 C762.33,239.77 764.97,240.10 767.60,240.10 C770.27,240.10 772.93,239.38 775.60,239.00 C779.17,238.49 782.73,237.93 786.30,237.40 L786.30,241.40 L715.30,241.40 Z" fill="#000" fill-opacity="0.1"/>
<path d="M715.30,189.10 C717.63,189.77 719.97,191.10 722.30,191.10 C724.97,191.10 727.63,187.20 730.30,187.20 C733.20,187.20 736.10,191.90 739.00,191.90 C741.40,191.90 743.80,187.60 746.20,187.60 C749.10,187.60 752.00,191.50 754.90,191.50 C756.50,191.50 758.10,187.89 759.70,187.60 C762.33,187.13 764.97,186.80 767.60,186.80 C770.27,186.80 772.93,187.52 775.60,187.90 C779.17,188.41 782.73,188.97 786.30,189.50" fill="none" stroke="#a6d48f" stroke-width="1.75" stroke-opacity="1.00"/>
<path d="M715.30,237.80 C717.63,237.13 719.97,235.80 722.30,235.80 C724.97,235.80 727.63,239.70 730.30,239.70 C733.20,239.70 736.10,235.00 739.00,235.00 C741.40,235.00 743.80,239.30 746.20,239.30 C749.10,239.30 752.00,235.40 754.90,235.40 C756.50,235.40 758.10,239.01 759.70,239.30 C762.33,239.77 764.97,240.10 767.60,240.10 C770.27,240.10 772.93,239.38 775.60,239.00 C779.17,238.49 782.73,237.93 786.30,237.40" fill="none" stroke="#f2b588" stroke-width="1.75"/>
</g>
<text x="750.8" y="251.0" text-anchor="middle" class="cl">Cpu 7</text>
<clipPath id="c8"><rect x="796.60" y="185.50" width="71.00" height="57.40"/></clipPath>
<g clip-path="url(#c8)">
<path d="M796.60,227.80 C797.24,223.50 797.87,219.57 798.51,214.92 C799.15,210.20 799.80,203.03 800.44,199.46 C801.30,194.69 802.16,189.28 803.02,188.51 C804.31,187.36 805.59,186.58 806.88,186.58 C809.03,186.58 811.18,186.94 813.32,187.22 C815.04,187.45 816.76,187.98 818.47,188.25 C819.76,188.46 821.05,188.77 822.34,188.77 C825.77,188.77 829.21,188.77 832.64,188.77 C836.08,188.77 839.51,188.51 842.95,188.51 C845.53,188.51 848.10,188.51 850.68,188.51 C852.40,188.51 854.11,186.79 855.83,186.58 C857.55,186.36 859.27,186.19 860.98,186.19 C863.19,186.19 865.39,186.88 867.60,187.22 L867.60,241.40 L796.60,241.40 Z" fill="#000" fill-opacity="0.1"/>
<path d="M796.60,199.10 C797.24,203.40 797.87,207.33 798.51,211.98 C799.15,216.70 799.80,223.87 800.44,227.44 C801.30,232.21 802.16,237.62 803.02,238.39 C804.31,239.54 805.59,240.32 806.88,240.32 C809.03,240.32 811.18,239.96 813.32,239.68 C815.04,239.45 816.76,238.92 818.47,238.65 C819.76,238.44 821.05,238.13 822.34,238.13 C825.77,238.13 829.21,238.13 832.64,238.13 C836.08,238.13 839.51,238.39 842.95,238.39 C845.53,238.39 848.10,238.39 850.68,238.39 C852.40,238.39 854.11,240.11 855.83,240.32 C857.55,240.54 859.27,240.71 860.98,240.71 C863.19,240.71 865.39,240.02 867.60,239.68 L867.60,241.40 L796.60,241.40 Z" fill="#000" fill-opacity="0.1"/>
<path d="M796.60,227.80 C797.24,223.50 797.87,219.57 798.51,214.92 C799.15,210.20 799.80,203.03 800.44,199.46 C801.30,194.69 802.16,189.28 803.02,188.51 C804.31,187.36 805.59,186.58 806.88,186.58 C809.03,186.58 811.18,186.94 813.32,187.22 C815.04,187.45 816.76,187.98 818.47,188.25 C819.76,188.46 821.05,188.77 822.34,188.77 C825.77,188.77 829.21,188.77 832.64,188.77 C836.08,188.77 839.51,188.51 842.95,188.51 C845.53,188.51 848.10,188.51 850.68,188.51 C852.40,188.51 854.11,186.79 855.83,186.58 C857.55,186.36 859.27,186.19 860.98,186.19 C863.19,186.19 865.39,186.88 867.60,187.22" fill="none" stroke="#a6d48f" stroke-width="1.75" stroke-opacity="1.00"/>
<path d="M796.60,199.10 C797.24,203.40 797.87,207.33 798.51,211.98 C799.15,216.70 799.80,223.87 800.44,227.44 C801.30,232.21 802.16,237.62 803.02,238.39 C804.31,239.54 805.59,240.32 806.88,240.32 C809.03,240.32 811.18,239.96 813.32,239.68 C815.04,239.45 816.76,238.92 818.47,238.65 C819.76,238.44 821.05,238.13 822.34,238.13 C825.77,238.13 829.21,238.13 832.64,238.13 C836.08,238.13 839.51,238.39 842.95,238.39 C845.53,238.39 848.10,238.39 850.68,238.39 C852.40,238.39 854.11,240.11 855.83,240.32 C857.55,240.54 859.27,240.71 860.98,240.71 C863.19,240.71 865.39,240.02 867.60,239.68" fill="none" stroke="#f2b588" stroke-width="1.75"/>
</g>
<text x="832.1" y="251.0" text-anchor="middle" class="cl">Cpu 8</text>
<clipPath id="c9"><rect x="877.90" y="185.50" width="71.00" height="57.40"/></clipPath>
<g clip-path="url(#c9)">
<path d="M877.90,189.15 C879.51,189.80 881.12,190.83 882.73,191.09 C884.88,191.43 887.02,191.73 889.17,191.73 C890.89,191.73 892.60,191.09 894.32,190.44 C895.61,189.96 896.90,187.97 898.19,187.48 C899.90,186.83 901.62,186.19 903.34,186.19 C906.77,186.19 910.21,186.19 913.64,186.19 C917.08,186.19 920.51,186.19 923.95,186.19 C925.67,186.19 927.38,187.49 929.10,187.87 C930.39,188.15 931.68,188.51 932.97,188.51 C934.25,188.51 935.54,187.54 936.83,187.22 C938.55,186.79 940.27,186.19 941.98,186.19 C944.29,186.19 946.59,186.45 948.90,186.58 L948.90,241.40 L877.90,241.40 Z" fill="#000" fill-opacity="0.1"/>
<path d="M877.90,237.75 C879.51,237.10 881.12,236.07 882.73,235.81 C884.88,235.47 887.02,235.17 889.17,235.17 C890.89,235.17 892.60,235.81 894.32,236.46 C895.61,236.94 896.90,238.93 898.19,239.42 C899.90,240.07 901.62,240.71 903.34,240.71 C906.77,240.71 910.21,240.71 913.64,240.71 C917.08,240.71 920.51,240.71 923.95,240.71 C925.67,240.71 927.38,239.41 929.10,239.03 C930.39,238.75 931.68,238.39 932.97,238.39 C934.25,238.39 935.54,239.36 936.83,239.68 C938.55,240.11 940.27,240.71 941.98,240.71 C944.29,240.71 946.59,240.45 948.90,240.32 L948.90,241.40 L877.90,241.40 Z" fill="#000" fill-opacity="0.1"/>
<path d="M877.90,189.15 C879.51,189.80 881.12,190.83 882.73,191.09 C884.88,191.43 887.02,191.73 889.17,191.73 C890.89,191.73 892.60,191.09 894.32,190.44 C895.61,189.96 896.90,187.97 898.19,187.48 C899.90,186.83 901.62,186.19 903.34,186.19 C906.77,186.19 910.21,186.19 913.64,186.19 C917.08,186.19 920.51,186.19 923.95,186.19 C925.67,186.19 927.38,187.49 929.10,187.87 C930.39,188.15 931.68,188.51 932.97,188.51 C934.25,188.51 935.54,187.54 936.83,187.22 C938.55,186.79 940.27,186.19 941.98,186.19 C944.29,186.19 946.59,186.45 948.90,186.58" fill="none" stroke="#a6d48f" stroke-width="1.75" stroke-opacity="1.00"/>
<path d="M877.90,237.75 C879.51,237.10 881.12,236.07 882.73,235.81 C884.88,235.47 887.02,235.17 889.17,235.17 C890.89,235.17 892.60,235.81 894.32,236.46 C895.61,236.94 896.90,238.93 898.19,239.42 C899.90,240.07 901.62,240.71 903.34,240.71 C906.77,240.71 910.21,240.71 913.64,240.71 C917.08,240.71 920.51,240.71 923.95,240.71 C925.67,240.71 927.38,239.41 929.10,239.03 C930.39,238.75 931.68,238.39 932.97,238.39 C934.25,238.39 935.54,239.36 936.83,239.68 C938.55,240.11 940.27,240.71 941.98,240.71 C944.29,240.71 946.59,240.45 948.90,240.32" fill="none" stroke="#f2b588" stroke-width="1.75"/>
</g>
<text x="913.4" y="251.0" text-anchor="middle" class="cl">Cpu 9</text>
<clipPath id="c10"><rect x="146.20" y="257.00" width="71.00" height="57.40"/></clipPath>
<g clip-path="url(#c10)">
<path d="M146.20,263.34 C148.90,263.34 151.60,263.34 154.31,263.34 C156.88,263.34 159.46,263.24 162.03,263.09 C163.75,262.98 165.47,261.56 167.19,261.15 C168.90,260.74 170.62,260.25 172.34,260.25 C175.77,260.25 179.21,260.25 182.64,260.25 C186.94,260.25 191.23,260.25 195.53,260.25 C198.10,260.25 200.68,260.67 203.25,261.15 C204.54,261.40 205.83,262.83 207.12,263.09 C208.84,263.43 210.55,263.73 212.27,263.73 C213.91,263.73 215.56,263.47 217.20,263.34 L217.20,312.90 L146.20,312.90 Z" fill="#000" fill-opacity="0.1"/>
<path d="M146.20,306.56 C148.90,306.56 151.60,306.56 154.31,306.56 C156.88,306.56 159.46,306.66 162.03,306.81 C163.75,306.92 165.47,308.34 167.19,308.75 C168.90,309.16 170.62,309.65 172.34,309.65 C175.77,309.65 179.21,309.65 182.64,309.65 C186.94,309.65 191.23,309.65 195.53,309.65 C198.10,309.65 200.68,309.23 203.25,308.75 C204.54,308.50 205.83,307.07 207.12,306.81 C208.84,306.47 210.55,306.17 212.27,306.17 C213.91,306.17 215.56,306.43 217.20,306.56 L217.20,312.90 L146.20,312.90 Z" fill="#000" fill-opacity="0.1"/>
<path d="M146.20,263.34 C148.90,263.34 151.60,263.34 154.31,263.34 C156.88,263.34 159.46,263.24 162.03,263.09 C163.75,262.98 165.47,261.56 167.19,261.15 C168.90,260.74 170.62,260.25 172.34,260.25 C175.77,260.25 179.21,260.25 182.64,260.25 C186.94,260.25 191.23,260.25 195.53,260.25 C198.10,260.25 200.68,260.67 203.25,261.15 C204.54,261.40 205.83,262.83 207.12,263.09 C208.84,263.43 210.55,263.73 212.27,263.73 C213.91,263.73 215.56,263.47 217.20,263.34" fill="none" stroke="#a6d48f" stroke-width="1.75" stroke-opacity="1.00"/>
<path d="M146.20,306.56 C148.90,306.56 151.60,306.56 154.31,306.56 C156.88,306.56 159.46,306.66 162.03,306.81 C163.75,306.92 165.47,308.34 167.19,308.75 C168.90,309.16 170.62,309.65 172.34,309.65 C175.77,309.65 179.21,309.65 182.64,309.65 C186.94,309.65 191.23,309.65 195.53,309.65 C198.10,309.65 200.68,309.23 203.25,308.75 C204.54,308.50 205.83,307.07 207.12,306.81 C208.84,306.47 210.55,306.17 212.27,306.17 C213.91,306.17 215.56,306.43 217.20,306.56" fill="none" stroke="#f2b588" stroke-width="1.75"/>
</g>
<text x="181.7" y="322.5" text-anchor="middle" class="cl">Cpu 10</text>
<clipPath id="c11"><rect x="227.50" y="257.00" width="71.00" height="57.40"/></clipPath>
<g clip-path="url(#c11)">
<path d="M227.50,258.19 C228.81,258.54 230.13,258.65 231.44,259.22 C232.73,259.79 234.02,261.89 235.31,264.37 C236.16,266.03 237.02,269.32 237.88,273.39 C238.53,276.44 239.17,283.73 239.81,287.56 C240.46,291.39 241.10,296.46 241.75,297.22 C242.39,297.98 243.03,298.51 243.68,298.51 C244.32,298.51 244.97,295.52 245.61,292.71 C246.25,289.90 246.90,282.18 247.54,277.26 C248.19,272.33 248.83,265.37 249.47,263.09 C250.12,260.81 250.76,258.75 251.41,258.58 C252.91,258.17 254.41,257.93 255.92,257.93 C256.77,257.93 257.63,259.17 258.49,260.51 C259.35,261.85 260.21,265.46 261.07,269.53 C261.71,272.58 262.36,279.20 263.00,283.70 C263.64,288.19 264.29,295.46 264.93,296.58 C265.58,297.70 266.22,298.51 266.86,298.51 C267.51,298.51 268.15,296.28 268.80,294.00 C269.44,291.72 270.08,284.56 270.73,279.83 C271.37,275.11 272.02,268.41 272.66,265.66 C273.31,262.92 273.95,259.87 274.59,259.87 C275.24,259.87 275.88,259.87 276.53,259.87 C277.38,259.87 278.24,261.40 279.10,261.80 C280.39,262.39 281.68,263.09 282.97,263.09 C285.11,263.09 287.26,260.70 289.41,260.51 C291.12,260.36 292.84,260.25 294.56,260.25 C295.87,260.25 297.19,260.42 298.50,260.51 L298.50,312.90 L227.50,312.90 Z" fill="#000" fill-opacity="0.1"/>
<path d="M227.50,311.71 C228.81,311.36 230.13,311.25 231.44,310.68 C232.73,310.11 234.02,308.01 235.31,305.53 C236.16,303.87 237.02,300.58 237.88,296.51 C238.53,293.46 239.17,286.17 239.81,282.34 C240.46,278.51 241.10,273.44 241.75,272.68 C242.39,271.92 243.03,271.39 243.68,271.39 C244.32,271.39 244.97,274.38 245.61,277.19 C246.25,280.00 246.90,287.72 247.54,292.64 C248.19,297.57 248.83,304.53 249.47,306.81 C250.12,309.09 250.76,311.15 251.41,311.32 C252.91,311.73 254.41,311.97 255.92,311.97 C256.77,311.97 257.63,310.73 258.49,309.39 C259.35,308.05 260.21,304.44 261.07,300.37 C261.71,297.32 262.36,290.70 263.00,286.20 C263.64,281.71 264.29,274.44 264.93,273.32 C265.58,272.20 266.22,271.39 266.86,271.39 C267.51,271.39 268.15,273.62 268.80,275.90 C269.44,278.18 270.08,285.34 270.73,290.07 C271.37,294.79 272.02,301.49 272.66,304.24 C273.31,306.98 273.95,310.03 274.59,310.03 C275.24,310.03 275.88,310.03 276.53,310.03 C277.38,310.03 278.24,308.50 279.10,308.10 C280.39,307.51 281.68,306.81 282.97,306.81 C285.11,306.81 287.26,309.20 289.41,309.39 C291.12,309.54 292.84,309.65 294.56,309.65 C295.87,309.65 297.19,309.48 298.50,309.39 L298.50,312.90 L227.50,312.90 Z" fill="#000" fill-opacity="0.1"/>
<path d="M227.50,258.19 C228.81,258.54 230.13,258.65 231.44,259.22 C232.73,259.79 234.02,261.89 235.31,264.37 C236.16,266.03 237.02,269.32 237.88,273.39 C238.53,276.44 239.17,283.73 239.81,287.56 C240.46,291.39 241.10,296.46 241.75,297.22 C242.39,297.98 243.03,298.51 243.68,298.51 C244.32,298.51 244.97,295.52 245.61,292.71 C246.25,289.90 246.90,282.18 247.54,277.26 C248.19,272.33 248.83,265.37 249.47,263.09 C250.12,260.81 250.76,258.75 251.41,258.58 C252.91,258.17 254.41,257.93 255.92,257.93 C256.77,257.93 257.63,259.17 258.49,260.51 C259.35,261.85 260.21,265.46 261.07,269.53 C261.71,272.58 262.36,279.20 263.00,283.70 C263.64,288.19 264.29,295.46 264.93,296.58 C265.58,297.70 266.22,298.51 266.86,298.51 C267.51,298.51 268.15,296.28 268.80,294.00 C269.44,291.72 270.08,284.56 270.73,279.83 C271.37,275.11 272.02,268.41 272.66,265.66 C273.31,262.92 273.95,259.87 274.59,259.87 C275.24,259.87 275.88,259.87 276.53,259.87 C277.38,259.87 278.24,261.40 279.10,261.80 C280.39,262.39 281.68,263.09 282.97,263.09 C285.11,263.09 287.26,260.70 289.41,260.51 C291.12,260.36 292.84,260.25 294.56,260.25 C295.87,260.25 297.19,260.42 298.50,260.51" fill="none" stroke="#a6d48f" stroke-width="1.75" stroke-opacity="1.00"/>
<path d="M227.50,311.71 C228.81,311.36 230.13,311.25 231.44,310.68 C232.73,310.11 234.02,308.01 235.31,305.53 C236.16,303.87 237.02,300.58 237.88,296.51 C238.53,293.46 239.17,286.17 239.81,282.34 C240.46,278.51 241.10,273.44 241.75,272.68 C242.39,271.92 243.03,271.39 243.68,271.39 C244.32,271.39 244.97,274.38 245.61,277.19 C246.25,280.00 246.90,287.72 247.54,292.64 C248.19,297.57 248.83,304.53 249.47,306.81 C250.12,309.09 250.76,311.15 251.41,311.32 C252.91,311.73 254.41,311.97 255.92,311.97 C256.77,311.97 257.63,310.73 258.49,309.39 C259.35,308.05 260.21,304.44 261.07,300.37 C261.71,297.32 262.36,290.70 263.00,286.20 C263.64,281.71 264.29,274.44 264.93,273.32 C265.58,272.20 266.22,271.39 266.86,271.39 C267.51,271.39 268.15,273.62 268.80,275.90 C269.44,278.18 270.08,285.34 270.73,290.07 C271.37,294.79 272.02,301.49 272.66,304.24 C273.31,306.98 273.95,310.03 274.59,310.03 C275.24,310.03 275.88,310.03 276.53,310.03 C277.38,310.03 278.24,308.50 279.10,308.10 C280.39,307.51 281.68,306.81 282.97,306.81 C285.11,306.81 287.26,309.20 289.41,309.39 C291.12,309.54 292.84,309.65 294.56,309.65 C295.87,309.65 297.19,309.48 298.50,309.39" fill="none" stroke="#f2b588" stroke-width="1.75"/>
</g>
<text x="263.0" y="322.5" text-anchor="middle" class="cl">Cpu 11</text>
<clipPath id="c12"><rect x="308.80" y="257.00" width="71.00" height="57.40"/></clipPath>
<g clip-path="url(#c12)">
<path d="M308.80,261.80 C310.87,262.23 312.94,262.97 315.02,263.09 C317.59,263.23 320.17,263.34 322.75,263.34 C324.46,263.34 326.18,261.41 327.90,260.51 C329.19,259.84 330.47,258.70 331.76,258.58 C334.34,258.34 336.92,258.19 339.49,258.19 C341.21,258.19 342.93,258.75 344.64,259.22 C346.36,259.70 348.08,260.92 349.80,261.54 C351.51,262.16 353.23,262.98 354.95,263.09 C357.53,263.24 360.10,263.34 362.68,263.34 C365.25,263.34 367.83,263.09 370.41,263.09 C373.54,263.09 376.67,263.09 379.80,263.09 L379.80,312.90 L308.80,312.90 Z" fill="#000" fill-opacity="0.1"/>
<path d="M308.80,308.10 C310.87,307.67 312.94,306.93 315.02,306.81 C317.59,306.67 320.17,306.56 322.75,306.56 C324.46,306.56 326.18,308.49 327.90,309.39 C329.19,310.06 330.47,311.20 331.76,311.32 C334.34,311.56 336.92,311.71 339.49,311.71 C341.21,311.71 342.93,311.15 344.64,310.68 C346.36,310.20 348.08,308.98 349.80,308.36 C351.51,307.74 353.23,306.92 354.95,306.81 C357.53,306.66 360.10,306.56 362.68,306.56 C365.25,306.56 367.83,306.81 370.41,306.81 C373.54,306.81 376.67,306.81 379.80,306.81 L379.80,312.90 L308.80,312.90 Z" fill="#000" fill-opacity="0.1"/>
<path d="M308.80,261.80 C310.87,262.23 312.94,262.97 315.02,263.09 C317.59,263.23 320.17,263.34 322.75,263.34 C324.46,263.34 326.18,261.41 327.90,260.51 C329.19,259.84 330.47,258.70 331.76,258.58 C334.34,258.34 336.92,258.19 339.49,258.19 C341.21,258.19 342.93,258.75 344.64,259.22 C346.36,259.70 348.08,260.92 349.80,261.54 C351.51,262.16 353.23,262.98 354.95,263.09 C357.53,263.24 360.10,263.34 362.68,263.34 C365.25,263.34 367.83,263.09 370.41,263.09 C373.54,263.09 376.67,263.09 379.80,263.09" fill="none" stroke="#a6d48f" stroke-width="1.75" stroke-opacity="1.00"/>
<path d="M308.80,308.10 C310.87,307.67 312.94,306.93 315.02,306.81 C317.59,306.67 320.17,306.56 322.75,306.56 C324.46,306.56 326.18,308.49 327.90,309.39 C329.19,310.06 330.47,311.20 331.76,311.32 C334.34,311.56 336.92,311.71 339.49,311.71 C341.21,311.71 342.93,311.15 344.64,310.68 C346.36,310.20 348.08,308.98 349.80,308.36 C351.51,307.74 353.23,306.92 354.95,306.81 C357.53,306.66 360.10,306.56 362.68,306.56 C365.25,306.56 367.83,306.81 370.41,306.81 C373.54,306.81 376.67,306.81 379.80,306.81" fill="none" stroke="#f2b588" stroke-width="1.75"/>
</g>
<text x="344.3" y="322.5" text-anchor="middle" class="cl">Cpu 12</text>
<clipPath id="c13"><rect x="390.10" y="257.00" width="71.00" height="57.40"/></clipPath>
<g clip-path="url(#c13)">
<path d="M390.10,259.22 C391.64,260.08 393.19,261.28 394.73,261.80 C396.88,262.52 399.02,263.34 401.17,263.34 C402.89,263.34 404.60,262.80 406.32,262.44 C408.47,261.99 410.62,260.77 412.76,260.77 C414.91,260.77 417.06,262.44 419.20,262.44 C421.35,262.44 423.50,261.08 425.64,260.77 C427.36,260.52 429.08,260.25 430.80,260.25 C432.08,260.25 433.37,260.65 434.66,261.15 C435.52,261.49 436.38,262.68 437.24,264.37 C437.88,265.64 438.53,269.86 439.17,273.39 C439.81,276.93 440.46,282.81 441.10,286.27 C441.96,290.89 442.82,296.87 443.68,297.87 C444.32,298.61 444.97,299.15 445.61,299.15 C446.25,299.15 446.90,296.06 447.54,293.36 C448.19,290.65 448.83,284.45 449.47,279.83 C450.12,275.22 450.76,268.27 451.41,265.66 C452.05,263.05 452.69,260.25 453.34,260.25 C454.41,260.25 455.49,260.36 456.56,260.51 C458.07,260.72 459.59,262.23 461.10,263.09 L461.10,312.90 L390.10,312.90 Z" fill="#000" fill-opacity="0.1"/>
<path d="M390.10,310.68 C391.64,309.82 393.19,308.62 394.73,308.10 C396.88,307.38 399.02,306.56 401.17,306.56 C402.89,306.56 404.60,307.10 406.32,307.46 C408.47,307.91 410.62,309.13 412.76,309.13 C414.91,309.13 417.06,307.46 419.20,307.46 C421.35,307.46 423.50,308.82 425.64,309.13 C427.36,309.38 429.08,309.65 430.80,309.65 C432.08,309.65 433.37,309.25 434.66,308.75 C435.52,308.41 436.38,307.22 437.24,305.53 C437.88,304.26 438.53,300.04 439.17,296.51 C439.81,292.97 440.46,287.09 441.10,283.63 C441.96,279.01 442.82,273.03 443.68,272.03 C444.32,271.29 444.97,270.75 445.61,270.75 C446.25,270.75 446.90,273.84 447.54,276.54 C448.19,279.25 448.83,285.45 449.47,290.07 C450.12,294.68 450.76,301.63 451.41,304.24 C452.05,306.85 452.69,309.65 453.34,309.65 C454.41,309.65 455.49,309.54 456.56,309.39 C458.07,309.18 459.59,307.67 461.10,306.81 L461.10,312.90 L390.10,312.90 Z" fill="#000" fill-opacity="0.1"/>
<path d="M390.10,259.22 C391.64,260.08 393.19,261.28 394.73,261.80 C396.88,262.52 399.02,263.34 401.17,263.34 C402.89,263.34 404.60,262.80 406.32,262.44 C408.47,261.99 410.62,260.77 412.76,260.77 C414.91,260.77 417.06,262.44 419.20,262.44 C421.35,262.44 423.50,261.08 425.64,260.77 C427.36,260.52 429.08,260.25 430.80,260.25 C432.08,260.25 433.37,260.65 434.66,261.15 C435.52,261.49 436.38,262.68 437.24,264.37 C437.88,265.64 438.53,269.86 439.17,273.39 C439.81,276.93 440.46,282.81 441.10,286.27 C441.96,290.89 442.82,296.87 443.68,297.87 C444.32,298.61 444.97,299.15 445.61,299.15 C446.25,299.15 446.90,296.06 447.54,293.36 C448.19,290.65 448.83,284.45 449.47,279.83 C450.12,275.22 450.76,268.27 451.41,265.66 C452.05,263.05 452.69,260.25 453.34,260.25 C454.41,260.25 455.49,260.36 456.56,260.51 C458.07,260.72 459.59,262.23 461.10,263.09" fill="none" stroke="#a6d48f" stroke-width="1.75" stroke-opacity="1.00"/>
<path d="M390.10,310.68 C391.64,309.82 393.19,308.62 394.73,308.10 C396.88,307.38 399.02,306.56 401.17,306.56 C402.89,306.56 404.60,307.10 406.32,307.46 C408.47,307.91 410.62,309.13 412.76,309.13 C414.91,309.13 417.06,307.46 419.20,307.46 C421.35,307.46 423.50,308.82 425.64,309.13 C427.36,309.38 429.08,309.65 430.80,309.65 C432.08,309.65 433.37,309.25 434.66,308.75 C435.52,308.41 436.38,307.22 437.24,305.53 C437.88,304.26 438.53,300.04 439.17,296.51 C439.81,292.97 440.46,287.09 441.10,283.63 C441.96,279.01 442.82,273.03 443.68,272.03 C444.32,271.29 444.97,270.75 445.61,270.75 C446.25,270.75 446.90,273.84 447.54,276.54 C448.19,279.25 448.83,285.45 449.47,290.07 C450.12,294.68 450.76,301.63 451.41,304.24 C452.05,306.85 452.69,309.65 453.34,309.65 C454.41,309.65 455.49,309.54 456.56,309.39 C458.07,309.18 459.59,307.67 461.10,306.81" fill="none" stroke="#f2b588" stroke-width="1.75"/>
</g>
<text x="425.6" y="322.5" text-anchor="middle" class="cl">Cpu 13</text>
<clipPath id="c14"><rect x="471.40" y="257.00" width="71.00" height="57.40"/></clipPath>
<g clip-path="url(#c14)">
<path d="M471.40,258.58 C472.75,259.44 474.09,260.35 475.44,261.15 C476.73,261.93 478.02,263.34 479.31,263.34 C481.88,263.34 484.46,263.34 487.03,263.34 C490.04,263.34 493.05,263.25 496.05,263.09 C497.77,262.99 499.49,260.80 501.20,260.51 C503.35,260.15 505.50,259.87 507.64,259.87 C511.94,259.87 516.23,259.87 520.53,259.87 C524.82,259.87 529.11,259.87 533.41,259.87 C535.12,259.87 536.84,260.58 538.56,261.15 C539.84,261.58 541.12,262.44 542.40,263.09 L542.40,312.90 L471.40,312.90 Z" fill="#000" fill-opacity="0.1"/>
<path d="M471.40,311.32 C472.75,310.46 474.09,309.55 475.44,308.75 C476.73,307.97 478.02,306.56 479.31,306.56 C481.88,306.56 484.46,306.56 487.03,306.56 C490.04,306.56 493.05,306.65 496.05,306.81 C497.77,306.91 499.49,309.10 501.20,309.39 C503.35,309.75 505.50,310.03 507.64,310.03 C511.94,310.03 516.23,310.03 520.53,310.03 C524.82,310.03 529.11,310.03 533.41,310.03 C535.12,310.03 536.84,309.32 538.56,308.75 C539.84,308.32 541.12,307.46 542.40,306.81 L542.40,312.90 L471.40,312.90 Z" fill="#000" fill-opacity="0.1"/>
<path d="M471.40,258.58 C472.75,259.44 474.09,260.35 475.44,261.15 C476.73,261.93 478.02,263.34 479.31,263.34 C481.88,263.34 484.46,263.34 487.03,263.34 C490.04,263.34 493.05,263.25 496.05,263.09 C497.77,262.99 499.49,260.80 501.20,260.51 C503.35,260.15 505.50,259.87 507.64,259.87 C511.94,259.87 516.23,259.87 520.53,259.87 C524.82,259.87 529.11,259.87 533.41,259.87 C535.12,259.87 536.84,260.58 538.56,261.15 C539.84,261.58 541.12,262.44 542.40,263.09" fill="none" stroke="#a6d48f" stroke-width="1.75" stroke-opacity="1.00"/>
<path d="M471.40,311.32 C472.75,310.46 474.09,309.55 475.44,308.75 C476.73,307.97 478.02,306.56 479.31,306.56 C481.88,306.56 484.46,306.56 487.03,306.56 C490.04,306.56 493.05,306.65 496.05,306.81 C497.77,306.91 499.49,309.10 501.20,309.39 C503.35,309.75 505.50,310.03 507.64,310.03 C511.94,310.03 516.23,310.03 520.53,310.03 C524.82,310.03 529.11,310.03 533.41,310.03 C535.12,310.03 536.84,309.32 538.56,308.75 C539.84,308.32 541.12,307.46 542.40,306.81" fill="none" stroke="#f2b588" stroke-width="1.75"/>
</g>
<text x="506.9" y="322.5" text-anchor="middle" class="cl">Cpu 14</text>
<clipPath id="c15"><rect x="552.70" y="257.00" width="71.00" height="57.40"/></clipPath>
<g clip-path="url(#c15)">
<path d="M552.70,258.58 C553.52,263.52 554.34,267.62 555.15,273.39 C556.01,279.46 556.87,292.98 557.73,295.29 C558.80,298.18 559.88,300.44 560.95,300.44 C561.81,300.44 562.67,294.84 563.53,290.14 C564.17,286.61 564.81,276.60 565.46,273.39 C566.32,269.11 567.18,265.13 568.03,264.37 C569.32,263.25 570.61,262.44 571.90,262.44 C573.62,262.44 575.33,263.09 577.05,263.09 C578.77,263.09 580.49,261.73 582.20,261.15 C584.35,260.44 586.50,259.22 588.64,259.22 C589.93,259.22 591.22,259.22 592.51,259.22 C593.15,259.22 593.80,264.44 594.44,268.24 C595.08,272.04 595.73,279.01 596.37,283.70 C597.02,288.38 597.66,295.46 598.31,296.58 C598.95,297.70 599.59,298.51 600.24,298.51 C600.88,298.51 601.53,295.96 602.17,293.36 C602.81,290.76 603.46,282.51 604.10,277.26 C604.75,272.00 605.39,263.58 606.03,261.80 C606.68,260.02 607.32,258.58 607.97,258.58 C608.61,258.58 609.25,261.56 609.90,264.37 C610.54,267.19 611.19,274.68 611.83,279.83 C612.47,284.98 613.12,293.23 613.76,295.29 C614.41,297.35 615.05,299.15 615.69,299.15 C616.55,299.15 617.41,297.63 618.27,295.93 C619.13,294.23 619.99,286.33 620.85,283.70 C621.80,280.79 622.75,279.40 623.70,277.26 L623.70,312.90 L552.70,312.90 Z" fill="#000" fill-opacity="0.1"/>
<path d="M552.70,311.32 C553.52,306.38 554.34,302.28 555.15,296.51 C556.01,290.44 556.87,276.92 557.73,274.61 C558.80,271.72 559.88,269.46 560.95,269.46 C561.81,269.46 562.67,275.06 563.53,279.76 C564.17,283.29 564.81,293.30 565.46,296.51 C566.32,300.79 567.18,304.77 568.03,305.53 C569.32,306.65 570.61,307.46 571.90,307.46 C573.62,307.46 575.33,306.81 577.05,306.81 C578.77,306.81 580.49,308.17 582.20,308.75 C584.35,309.46 586.50,310.68 588.64,310.68 C589.93,310.68 591.22,310.68 592.51,310.68 C593.15,310.68 593.80,305.46 594.44,301.66 C595.08,297.86 595.73,290.89 596.37,286.20 C597.02,281.52 597.66,274.44 598.31,273.32 C598.95,272.20 599.59,271.39 600.24,271.39 C600.88,271.39 601.53,273.94 602.17,276.54 C602.81,279.14 603.46,287.39 604.10,292.64 C604.75,297.90 605.39,306.32 606.03,308.10 C606.68,309.88 607.32,311.32 607.97,311.32 C608.61,311.32 609.25,308.34 609.90,305.53 C610.54,302.71 611.19,295.22 611.83,290.07 C612.47,284.92 613.12,276.67 613.76,274.61 C614.41,272.55 615.05,270.75 615.69,270.75 C616.55,270.75 617.41,272.27 618.27,273.97 C619.13,275.67 619.99,283.57 620.85,286.20 C621.80,289.11 622.75,290.50 623.70,292.64 L623.70,312.90 L552.70,312.90 Z" fill="#000" fill-opacity="0.1"/>
<path d="M552.70,258.58 C553.52,263.52 554.34,267.62 555.15,273.39 C556.01,279.46 556.87,292.98 557.73,295.29 C558.80,298.18 559.88,300.44 560.95,300.44 C561.81,300.44 562.67,294.84 563.53,290.14 C564.17,286.61 564.81,276.60 565.46,273.39 C566.32,269.11 567.18,265.13 568.03,264.37 C569.32,263.25 570.61,262.44 571.90,262.44 C573.62,262.44 575.33,263.09 577.05,263.09 C578.77,263.09 580.49,261.73 582.20,261.15 C584.35,260.44 586.50,259.22 588.64,259.22 C589.93,259.22 591.22,259.22 592.51,259.22 C593.15,259.22 593.80,264.44 594.44,268.24 C595.08,272.04 595.73,279.01 596.37,283.70 C597.02,288.38 597.66,295.46 598.31,296.58 C598.95,297.70 599.59,298.51 600.24,298.51 C600.88,298.51 601.53,295.96 602.17,293.36 C602.81,290.76 603.46,282.51 604.10,277.26 C604.75,272.00 605.39,263.58 606.03,261.80 C606.68,260.02 607.32,258.58 607.97,258.58 C608.61,258.58 609.25,261.56 609.90,264.37 C610.54,267.19 611.19,274.68 611.83,279.83 C612.47,284.98 613.12,293.23 613.76,295.29 C614.41,297.35 615.05,299.15 615.69,299.15 C616.55,299.15 617.41,297.63 618.27,295.93 C619.13,294.23 619.99,286.33 620.85,283.70 C621.80,280.79 622.75,279.40 623.70,277.26" fill="none" stroke="#a6d48f" stroke-width="1.75" stroke-opacity="1.00"/>
<path d="M552.70,311.32 C553.52,306.38 554.34,302.28 555.15,296.51 C556.01,290.44 556.87,276.92 557.73,274.61 C558.80,271.72 559.88,269.46 560.95,269.46 C561.81,269.46 562.67,275.06 563.53,279.76 C564.17,283.29 564.81,293.30 565.46,296.51 C566.32,300.79 567.18,304.77 568.03,305.53 C569.32,306.65 570.61,307.46 571.90,307.46 C573.62,307.46 575.33,306.81 577.05,306.81 C578.77,306.81 580.49,308.17 582.20,308.75 C584.35,309.46 586.50,310.68 588.64,310.68 C589.93,310.68 591.22,310.68 592.51,310.68 C593.15,310.68 593.80,305.46 594.44,301.66 C595.08,297.86 595.73,290.89 596.37,286.20 C597.02,281.52 597.66,274.44 598.31,273.32 C598.95,272.20 599.59,271.39 600.24,271.39 C600.88,271.39 601.53,273.94 602.17,276.54 C602.81,279.14 603.46,287.39 604.10,292.64 C604.75,297.90 605.39,306.32 606.03,308.10 C606.68,309.88 607.32,311.32 607.97,311.32 C608.61,311.32 609.25,308.34 609.90,305.53 C610.54,302.71 611.19,295.22 611.83,290.07 C612.47,284.92 613.12,276.67 613.76,274.61 C614.41,272.55 615.05,270.75 615.69,270.75 C616.55,270.75 617.41,272.27 618.27,273.97 C619.13,275.67 619.99,283.57 620.85,286.20 C621.80,289.11 622.75,290.50 623.70,292.64" fill="none" stroke="#f2b588" stroke-width="1.75"/>
</g>
<text x="588.2" y="322.5" text-anchor="middle" class="cl">Cpu 15</text>
<clipPath id="c16"><rect x="634.00" y="257.00" width="71.00" height="57.40"/></clipPath>
<g clip-path="url(#c16)">
<path d="M634.00,261.80 C636.01,262.14 638.01,262.70 640.02,262.83 C642.16,262.97 644.31,263.09 646.46,263.09 C649.03,263.09 651.61,262.39 654.19,261.80 C656.33,261.31 658.48,260.11 660.63,259.48 C662.34,258.97 664.06,258.19 665.78,258.19 C668.36,258.19 670.93,258.19 673.51,258.19 C674.58,258.19 675.66,259.70 676.73,260.51 C677.80,261.32 678.88,263.09 679.95,263.09 C681.24,263.09 682.53,262.76 683.81,262.44 C685.10,262.12 686.39,260.51 687.68,260.51 C689.40,260.51 691.11,260.84 692.83,261.15 C694.55,261.46 696.27,262.72 697.98,262.83 C700.32,262.98 702.66,263.00 705.00,263.09 L705.00,312.90 L634.00,312.90 Z" fill="#000" fill-opacity="0.1"/>
<path d="M634.00,308.10 C636.01,307.76 638.01,307.20 640.02,307.07 C642.16,306.93 644.31,306.81 646.46,306.81 C649.03,306.81 651.61,307.51 654.19,308.10 C656.33,308.59 658.48,309.79 660.63,310.42 C662.34,310.93 664.06,311.71 665.78,311.71 C668.36,311.71 670.93,311.71 673.51,311.71 C674.58,311.71 675.66,310.20 676.73,309.39 C677.80,308.58 678.88,306.81 679.95,306.81 C681.24,306.81 682.53,307.14 683.81,307.46 C685.10,307.78 686.39,309.39 687.68,309.39 C689.40,309.39 691.11,309.06 692.83,308.75 C694.55,308.44 696.27,307.18 697.98,307.07 C700.32,306.92 702.66,306.90 705.00,306.81 L705.00,312.90 L634.00,312.90 Z" fill="#000" fill-opacity="0.1"/>
<path d="M634.00,261.80 C636.01,262.14 638.01,262.70 640.02,262.83 C642.16,262.97 644.31,263.09 646.46,263.09 C649.03,263.09 651.61,262.39 654.19,261.80 C656.33,261.31 658.48,260.11 660.63,259.48 C662.34,258.97 664.06,258.19 665.78,258.19 C668.36,258.19 670.93,258.19 673.51,258.19 C674.58,258.19 675.66,259.70 676.73,260.51 C677.80,261.32 678.88,263.09 679.95,263.09 C681.24,263.09 682.53,262.76 683.81,262.44 C685.10,262.12 686.39,260.51 687.68,260.51 C689.40,260.51 691.11,260.84 692.83,261.15 C694.55,261.46 696.27,262.72 697.98,262.83 C700.32,262.98 702.66,263.00 705.00,263.09" fill="none" stroke="#a6d48f" stroke-width="1.75" stroke-opacity="1.00"/>
<path d="M634.00,308.10 C636.01,307.76 638.01,307.20 640.02,307.07 C642.16,306.93 644.31,306.81 646.46,306.81 C649.03,306.81 651.61,307.51 654.19,308.10 C656.33,308.59 658.48,309.79 660.63,310.42 C662.34,310.93 664.06,311.71 665.78,311.71 C668.36,311.71 670.93,311.71 673.51,311.71 C674.58,311.71 675.66,310.20 676.73,309.39 C677.80,308.58 678.88,306.81 679.95,306.81 C681.24,306.81 682.53,307.14 683.81,307.46 C685.10,307.78 686.39,309.39 687.68,309.39 C689.40,309.39 691.11,309.06 692.83,308.75 C694.55,308.44 696.27,307.18 697.98,307.07 C700.32,306.92 702.66,306.90 705.00,306.81" fill="none" stroke="#f2b588" stroke-width="1.75"/>
</g>
<text x="669.5" y="322.5" text-anchor="middle" class="cl">Cpu 16</text>
<clipPath id="c17"><rect x="715.30" y="257.00" width="71.00" height="57.40"/></clipPath>
<g clip-path="url(#c17)">
<path d="M715.30,258.24 C728.70,258.24 742.09,258.24 755.49,258.24 C757.10,258.24 758.71,260.33 760.32,260.33 C761.93,260.33 763.54,258.90 765.15,258.72 C766.76,258.54 768.37,258.40 769.98,258.40 C772.13,258.40 774.28,260.33 776.42,260.33 C778.03,260.33 779.65,259.55 781.26,259.21 C782.94,258.85 784.62,258.56 786.30,258.24 L786.30,312.90 L715.30,312.90 Z" fill="#000" fill-opacity="0.1"/>
<path d="M715.30,311.66 C728.70,311.66 742.09,311.66 755.49,311.66 C757.10,311.66 758.71,309.57 760.32,309.57 C761.93,309.57 763.54,311.00 765.15,311.18 C766.76,311.36 768.37,311.50 769.98,311.50 C772.13,311.50 774.28,309.57 776.42,309.57 C778.03,309.57 779.65,310.35 781.26,310.69 C782.94,311.05 784.62,311.34 786.30,311.66 L786.30,312.90 L715.30,312.90 Z" fill="#000" fill-opacity="0.1"/>
<path d="M715.30,258.24 C728.70,258.24 742.09,258.24 755.49,258.24 C757.10,258.24 758.71,260.33 760.32,260.33 C761.93,260.33 763.54,258.90 765.15,258.72 C766.76,258.54 768.37,258.40 769.98,258.40 C772.13,258.40 774.28,260.33 776.42,260.33 C778.03,260.33 779.65,259.55 781.26,259.21 C782.94,258.85 784.62,258.56 786.30,258.24" fill="none" stroke="#a6d48f" stroke-width="1.75" stroke-opacity="0.55"/>
<path d="M715.30,311.66 C728.70,311.66 742.09,311.66 755.49,311.66 C757.10,311.66 758.71,309.57 760.32,309.57 C761.93,309.57 763.54,311.00 765.15,311.18 C766.76,311.36 768.37,311.50 769.98,311.50 C772.13,311.50 774.28,309.57 776.42,309.57 C778.03,309.57 779.65,310.35 781.26,310.69 C782.94,311.05 784.62,311.34 786.30,311.66" fill="none" stroke="#f2b588" stroke-width="1.75"/>
</g>
<text x="750.8" y="322.5" text-anchor="middle" class="cl">Cpu 17</text>
<clipPath id="c18"><rect x="796.60" y="257.00" width="71.00" height="57.40"/></clipPath>
<g clip-path="url(#c18)">
<path d="M796.60,258.08 C820.27,258.08 843.93,258.08 867.60,258.08 L867.60,312.90 L796.60,312.90 Z" fill="#000" fill-opacity="0.1"/>
<path d="M796.60,311.82 C820.27,311.82 843.93,311.82 867.60,311.82 L867.60,312.90 L796.60,312.90 Z" fill="#000" fill-opacity="0.1"/>
<path d="M796.60,258.08 C820.27,258.08 843.93,258.08 867.60,258.08" fill="none" stroke="#a6d48f" stroke-width="1.75" stroke-opacity="0.35"/>
<path d="M796.60,311.82 C820.27,311.82 843.93,311.82 867.60,311.82" fill="none" stroke="#f2b588" stroke-width="1.75"/>
</g>
<text x="832.1" y="322.5" text-anchor="middle" class="cl">Cpu 18</text>
<clipPath id="c19"><rect x="877.90" y="257.00" width="71.00" height="57.40"/></clipPath>
<g clip-path="url(#c19)">
<path d="M877.90,258.08 C901.57,258.08 925.23,258.08 948.90,258.08 L948.90,312.90 L877.90,312.90 Z" fill="#000" fill-opacity="0.1"/>
<path d="M877.90,311.82 C901.57,311.82 925.23,311.82 948.90,311.82 L948.90,312.90 L877.90,312.90 Z" fill="#000" fill-opacity="0.1"/>
<path d="M877.90,258.08 C901.57,258.08 925.23,258.08 948.90,258.08" fill="none" stroke="#a6d48f" stroke-width="1.75" stroke-opacity="0.35"/>
<path d="M877.90,311.82 C901.57,311.82 925.23,311.82 948.90,311.82" fill="none" stroke="#f2b588" stroke-width="1.75"/>
</g>
<text x="913.4" y="322.5" text-anchor="middle" class="cl">Cpu 19</text>
<clipPath id="c20"><rect x="146.20" y="328.50" width="71.00" height="57.40"/></clipPath>
<g clip-path="url(#c20)">
<path d="M146.20,332.15 C148.04,332.71 149.89,333.63 151.73,333.83 C154.31,334.11 156.88,334.22 159.46,334.34 C162.89,334.51 166.33,334.73 169.76,334.73 C171.05,334.73 172.34,333.37 173.63,332.80 C174.92,332.23 176.20,331.25 177.49,331.25 C178.78,331.25 180.07,332.07 181.36,332.54 C182.64,333.01 183.93,334.09 185.22,334.09 C186.94,334.09 188.66,332.48 190.37,332.15 C192.09,331.83 193.81,331.58 195.53,331.51 C198.96,331.37 202.40,331.25 205.83,331.25 C208.41,331.25 210.98,331.66 213.56,332.15 C214.77,332.39 215.99,333.44 217.20,334.09 L217.20,384.40 L146.20,384.40 Z" fill="#000" fill-opacity="0.1"/>
<path d="M146.20,380.75 C148.04,380.19 149.89,379.27 151.73,379.07 C154.31,378.79 156.88,378.68 159.46,378.56 C162.89,378.39 166.33,378.17 169.76,378.17 C171.05,378.17 172.34,379.53 173.63,380.10 C174.92,380.67 176.20,381.65 177.49,381.65 C178.78,381.65 180.07,380.83 181.36,380.36 C182.64,379.89 183.93,378.81 185.22,378.81 C186.94,378.81 188.66,380.42 190.37,380.75 C192.09,381.07 193.81,381.32 195.53,381.39 C198.96,381.53 202.40,381.65 205.83,381.65 C208.41,381.65 210.98,381.24 213.56,380.75 C214.77,380.51 215.99,379.46 217.20,378.81 L217.20,384.40 L146.20,384.40 Z" fill="#000" fill-opacity="0.1"/>
<path d="M146.20,332.15 C148.04,332.71 149.89,333.63 151.73,333.83 C154.31,334.11 156.88,334.22 159.46,334.34 C162.89,334.51 166.33,334.73 169.76,334.73 C171.05,334.73 172.34,333.37 173.63,332.80 C174.92,332.23 176.20,331.25 177.49,331.25 C178.78,331.25 180.07,332.07 181.36,332.54 C182.64,333.01 183.93,334.09 185.22,334.09 C186.94,334.09 188.66,332.48 190.37,332.15 C192.09,331.83 193.81,331.58 195.53,331.51 C198.96,331.37 202.40,331.25 205.83,331.25 C208.41,331.25 210.98,331.66 213.56,332.15 C214.77,332.39 215.99,333.44 217.20,334.09" fill="none" stroke="#a6d48f" stroke-width="1.75" stroke-opacity="1.00"/>
<path d="M146.20,380.75 C148.04,380.19 149.89,379.27 151.73,379.07 C154.31,378.79 156.88,378.68 159.46,378.56 C162.89,378.39 166.33,378.17 169.76,378.17 C171.05,378.17 172.34,379.53 173.63,380.10 C174.92,380.67 176.20,381.65 177.49,381.65 C178.78,381.65 180.07,380.83 181.36,380.36 C182.64,379.89 183.93,378.81 185.22,378.81 C186.94,378.81 188.66,380.42 190.37,380.75 C192.09,381.07 193.81,381.32 195.53,381.39 C198.96,381.53 202.40,381.65 205.83,381.65 C208.41,381.65 210.98,381.24 213.56,380.75 C214.77,380.51 215.99,379.46 217.20,378.81" fill="none" stroke="#f2b588" stroke-width="1.75"/>
</g>
<text x="181.7" y="394.0" text-anchor="middle" class="cl">Cpu 20</text>
<clipPath id="c21"><rect x="227.50" y="328.50" width="71.00" height="57.40"/></clipPath>
<g clip-path="url(#c21)">
<path d="M227.50,329.32 C232.68,329.32 237.86,329.32 243.03,329.32 C244.32,329.32 245.61,330.07 246.90,330.48 C248.19,330.89 249.47,331.77 250.76,331.77 C252.05,331.77 253.34,331.28 254.63,330.87 C255.92,330.46 257.20,328.93 258.49,328.93 C261.07,328.93 263.64,329.10 266.22,329.32 C267.51,329.43 268.80,330.32 270.08,330.61 C271.37,330.89 272.66,331.25 273.95,331.25 C275.67,331.25 277.38,330.54 279.10,330.22 C280.82,329.90 282.54,329.32 284.25,329.32 C289.00,329.32 293.75,329.32 298.50,329.32 L298.50,384.40 L227.50,384.40 Z" fill="#000" fill-opacity="0.1"/>
<path d="M227.50,383.58 C232.68,383.58 237.86,383.58 243.03,383.58 C244.32,383.58 245.61,382.83 246.90,382.42 C248.19,382.01 249.47,381.13 250.76,381.13 C252.05,381.13 253.34,381.62 254.63,382.03 C255.92,382.44 257.20,383.97 258.49,383.97 C261.07,383.97 263.64,383.80 266.22,383.58 C267.51,383.47 268.80,382.58 270.08,382.29 C271.37,382.01 272.66,381.65 273.95,381.65 C275.67,381.65 277.38,382.36 279.10,382.68 C280.82,383.00 282.54,383.58 284.25,383.58 C289.00,383.58 293.75,383.58 298.50,383.58 L298.50,384.40 L227.50,384.40 Z" fill="#000" fill-opacity="0.1"/>
<path d="M227.50,329.32 C232.68,329.32 237.86,329.32 243.03,329.32 C244.32,329.32 245.61,330.07 246.90,330.48 C248.19,330.89 249.47,331.77 250.76,331.77 C252.05,331.77 253.34,331.28 254.63,330.87 C255.92,330.46 257.20,328.93 258.49,328.93 C261.07,328.93 263.64,329.10 266.22,329.32 C267.51,329.43 268.80,330.32 270.08,330.61 C271.37,330.89 272.66,331.25 273.95,331.25 C275.67,331.25 277.38,330.54 279.10,330.22 C280.82,329.90 282.54,329.32 284.25,329.32 C289.00,329.32 293.75,329.32 298.50,329.32" fill="none" stroke="#a6d48f" stroke-width="1.75" stroke-opacity="1.00"/>
<path d="M227.50,383.58 C232.68,383.58 237.86,383.58 243.03,383.58 C244.32,383.58 245.61,382.83 246.90,382.42 C248.19,382.01 249.47,381.13 250.76,381.13 C252.05,381.13 253.34,381.62 254.63,382.03 C255.92,382.44 257.20,383.97 258.49,383.97 C261.07,383.97 263.64,383.80 266.22,383.58 C267.51,383.47 268.80,382.58 270.08,382.29 C271.37,382.01 272.66,381.65 273.95,381.65 C275.67,381.65 277.38,382.36 279.10,382.68 C280.82,383.00 282.54,383.58 284.25,383.58 C289.00,383.58 293.75,383.58 298.50,383.58" fill="none" stroke="#f2b588" stroke-width="1.75"/>
</g>
<text x="263.0" y="394.0" text-anchor="middle" class="cl">Cpu 21</text>
<clipPath id="c22"><rect x="308.80" y="328.50" width="71.00" height="57.40"/></clipPath>
<g clip-path="url(#c22)">
<path d="M308.80,329.61 C317.47,329.61 326.14,329.61 334.81,329.61 C336.41,329.61 338.01,331.21 339.61,331.21 C341.21,331.21 342.81,329.77 344.41,329.77 C354.01,329.77 363.61,329.77 373.22,329.77 C374.82,329.77 376.42,330.89 378.02,330.89 C378.61,330.89 379.21,330.57 379.80,330.41 L379.80,384.40 L308.80,384.40 Z" fill="#000" fill-opacity="0.1"/>
<path d="M308.80,383.29 C317.47,383.29 326.14,383.29 334.81,383.29 C336.41,383.29 338.01,381.69 339.61,381.69 C341.21,381.69 342.81,383.13 344.41,383.13 C354.01,383.13 363.61,383.13 373.22,383.13 C374.82,383.13 376.42,382.01 378.02,382.01 C378.61,382.01 379.21,382.33 379.80,382.49 L379.80,384.40 L308.80,384.40 Z" fill="#000" fill-opacity="0.1"/>
<path d="M308.80,329.61 C317.47,329.61 326.14,329.61 334.81,329.61 C336.41,329.61 338.01,331.21 339.61,331.21 C341.21,331.21 342.81,329.77 344.41,329.77 C354.01,329.77 363.61,329.77 373.22,329.77 C374.82,329.77 376.42,330.89 378.02,330.89 C378.61,330.89 379.21,330.57 379.80,330.41" fill="none" stroke="#a6d48f" stroke-width="1.75" stroke-opacity="0.55"/>
<path d="M308.80,383.29 C317.47,383.29 326.14,383.29 334.81,383.29 C336.41,383.29 338.01,381.69 339.61,381.69 C341.21,381.69 342.81,383.13 344.41,383.13 C354.01,383.13 363.61,383.13 373.22,383.13 C374.82,383.13 376.42,382.01 378.02,382.01 C378.61,382.01 379.21,382.33 379.80,382.49" fill="none" stroke="#f2b588" stroke-width="1.75"/>
</g>
<text x="344.3" y="394.0" text-anchor="middle" class="cl">Cpu 22</text>
<clipPath id="c23"><rect x="390.10" y="328.50" width="71.00" height="57.40"/></clipPath>
<g clip-path="url(#c23)">
<path d="M390.10,329.61 C413.77,329.61 437.43,329.61 461.10,329.61 L461.10,384.40 L390.10,384.40 Z" fill="#000" fill-opacity="0.1"/>
<path d="M390.10,383.29 C413.77,383.29 437.43,383.29 461.10,383.29 L461.10,384.40 L390.10,384.40 Z" fill="#000" fill-opacity="0.1"/>
<path d="M390.10,329.61 C413.77,329.61 437.43,329.61 461.10,329.61" fill="none" stroke="#a6d48f" stroke-width="1.75" stroke-opacity="0.35"/>
<path d="M390.10,383.29 C413.77,383.29 437.43,383.29 461.10,383.29" fill="none" stroke="#f2b588" stroke-width="1.75"/>
</g>
<text x="425.6" y="394.0" text-anchor="middle" class="cl">Cpu 23</text>
<clipPath id="c24"><rect x="471.40" y="328.50" width="71.00" height="57.40"/></clipPath>
<g clip-path="url(#c24)">
<path d="M471.40,332.49 C473.27,333.02 475.13,333.76 477.00,334.09 C479.14,334.46 481.27,334.89 483.40,334.89 C485.54,334.89 487.67,334.21 489.81,333.77 C491.94,333.33 494.07,332.31 496.21,332.17 C500.47,331.89 504.74,331.69 509.01,331.69 C512.21,331.69 515.41,332.30 518.61,332.81 C520.75,333.15 522.88,334.41 525.01,334.41 C526.61,334.41 528.22,333.34 529.82,332.81 C531.42,332.27 533.02,331.21 534.62,331.21 C536.22,331.21 537.82,332.64 539.42,333.29 C540.41,333.69 541.41,334.03 542.40,334.41 L542.40,384.40 L471.40,384.40 Z" fill="#000" fill-opacity="0.1"/>
<path d="M471.40,380.41 C473.27,379.88 475.13,379.14 477.00,378.81 C479.14,378.44 481.27,378.01 483.40,378.01 C485.54,378.01 487.67,378.69 489.81,379.13 C491.94,379.57 494.07,380.59 496.21,380.73 C500.47,381.01 504.74,381.21 509.01,381.21 C512.21,381.21 515.41,380.60 518.61,380.09 C520.75,379.75 522.88,378.49 525.01,378.49 C526.61,378.49 528.22,379.56 529.82,380.09 C531.42,380.63 533.02,381.69 534.62,381.69 C536.22,381.69 537.82,380.26 539.42,379.61 C540.41,379.21 541.41,378.87 542.40,378.49 L542.40,384.40 L471.40,384.40 Z" fill="#000" fill-opacity="0.1"/>
<path d="M471.40,332.49 C473.27,333.02 475.13,333.76 477.00,334.09 C479.14,334.46 481.27,334.89 483.40,334.89 C485.54,334.89 487.67,334.21 489.81,333.77 C491.94,333.33 494.07,332.31 496.21,332.17 C500.47,331.89 504.74,331.69 509.01,331.69 C512.21,331.69 515.41,332.30 518.61,332.81 C520.75,333.15 522.88,334.41 525.01,334.41 C526.61,334.41 528.22,333.34 529.82,332.81 C531.42,332.27 533.02,331.21 534.62,331.21 C536.22,331.21 537.82,332.64 539.42,333.29 C540.41,333.69 541.41,334.03 542.40,334.41" fill="none" stroke="#a6d48f" stroke-width="1.75" stroke-opacity="1.00"/>
<path d="M471.40,380.41 C473.27,379.88 475.13,379.14 477.00,378.81 C479.14,378.44 481.27,378.01 483.40,378.01 C485.54,378.01 487.67,378.69 489.81,379.13 C491.94,379.57 494.07,380.59 496.21,380.73 C500.47,381.01 504.74,381.21 509.01,381.21 C512.21,381.21 515.41,380.60 518.61,380.09 C520.75,379.75 522.88,378.49 525.01,378.49 C526.61,378.49 528.22,379.56 529.82,380.09 C531.42,380.63 533.02,381.69 534.62,381.69 C536.22,381.69 537.82,380.26 539.42,379.61 C540.41,379.21 541.41,378.87 542.40,378.49" fill="none" stroke="#f2b588" stroke-width="1.75"/>
</g>
<text x="506.9" y="394.0" text-anchor="middle" class="cl">Cpu 24</text>
<clipPath id="c25"><rect x="552.70" y="328.50" width="71.00" height="57.40"/></clipPath>
<g clip-path="url(#c25)">
<path d="M552.70,331.69 C554.67,332.38 556.65,333.31 558.62,333.77 C560.76,334.26 562.89,334.89 565.02,334.89 C567.16,334.89 569.29,333.80 571.43,333.29 C573.03,332.90 574.63,332.17 576.23,332.17 C577.83,332.17 579.43,333.22 581.03,333.77 C582.10,334.13 583.16,334.89 584.23,334.89 C585.83,334.89 587.43,333.94 589.03,333.29 C590.36,332.74 591.70,331.21 593.03,331.21 C594.37,331.21 595.70,332.52 597.03,333.29 C598.10,333.90 599.17,335.37 600.23,335.37 C601.83,335.37 603.43,333.54 605.03,332.81 C606.64,332.07 608.24,330.89 609.84,330.89 C611.97,330.89 614.10,331.26 616.24,331.69 C617.84,332.01 619.44,333.49 621.04,334.09 C621.93,334.42 622.81,334.62 623.70,334.89 L623.70,384.40 L552.70,384.40 Z" fill="#000" fill-opacity="0.1"/>
<path d="M552.70,381.21 C554.67,380.52 556.65,379.59 558.62,379.13 C560.76,378.64 562.89,378.01 565.02,378.01 C567.16,378.01 569.29,379.10 571.43,379.61 C573.03,380.00 574.63,380.73 576.23,380.73 C577.83,380.73 579.43,379.68 581.03,379.13 C582.10,378.77 583.16,378.01 584.23,378.01 C585.83,378.01 587.43,378.96 589.03,379.61 C590.36,380.16 591.70,381.69 593.03,381.69 C594.37,381.69 595.70,380.38 597.03,379.61 C598.10,379.00 599.17,377.53 600.23,377.53 C601.83,377.53 603.43,379.36 605.03,380.09 C606.64,380.83 608.24,382.01 609.84,382.01 C611.97,382.01 614.10,381.64 616.24,381.21 C617.84,380.89 619.44,379.41 621.04,378.81 C621.93,378.48 622.81,378.28 623.70,378.01 L623.70,384.40 L552.70,384.40 Z" fill="#000" fill-opacity="0.1"/>
<path d="M552.70,331.69 C554.67,332.38 556.65,333.31 558.62,333.77 C560.76,334.26 562.89,334.89 565.02,334.89 C567.16,334.89 569.29,333.80 571.43,333.29 C573.03,332.90 574.63,332.17 576.23,332.17 C577.83,332.17 579.43,333.22 581.03,333.77 C582.10,334.13 583.16,334.89 584.23,334.89 C585.83,334.89 587.43,333.94 589.03,333.29 C590.36,332.74 591.70,331.21 593.03,331.21 C594.37,331.21 595.70,332.52 597.03,333.29 C598.10,333.90 599.17,335.37 600.23,335.37 C601.83,335.37 603.43,333.54 605.03,332.81 C606.64,332.07 608.24,330.89 609.84,330.89 C611.97,330.89 614.10,331.26 616.24,331.69 C617.84,332.01 619.44,333.49 621.04,334.09 C621.93,334.42 622.81,334.62 623.70,334.89" fill="none" stroke="#a6d48f" stroke-width="1.75" stroke-opacity="1.00"/>
<path d="M552.70,381.21 C554.67,380.52 556.65,379.59 558.62,379.13 C560.76,378.64 562.89,378.01 565.02,378.01 C567.16,378.01 569.29,379.10 571.43,379.61 C573.03,380.00 574.63,380.73 576.23,380.73 C577.83,380.73 579.43,379.68 581.03,379.13 C582.10,378.77 583.16,378.01 584.23,378.01 C585.83,378.01 587.43,378.96 589.03,379.61 C590.36,380.16 591.70,381.69 593.03,381.69 C594.37,381.69 595.70,380.38 597.03,379.61 C598.10,379.00 599.17,377.53 600.23,377.53 C601.83,377.53 603.43,379.36 605.03,380.09 C606.64,380.83 608.24,382.01 609.84,382.01 C611.97,382.01 614.10,381.64 616.24,381.21 C617.84,380.89 619.44,379.41 621.04,378.81 C621.93,378.48 622.81,378.28 623.70,378.01" fill="none" stroke="#f2b588" stroke-width="1.75"/>
</g>
<text x="588.2" y="394.0" text-anchor="middle" class="cl">Cpu 25</text>
<clipPath id="c26"><rect x="634.00" y="328.50" width="71.00" height="57.40"/></clipPath>
<g clip-path="url(#c26)">
<path d="M634.00,332.17 C636.20,332.81 638.40,333.76 640.60,334.09 C643.27,334.48 645.94,334.89 648.60,334.89 C651.27,334.89 653.94,334.89 656.61,334.89 C658.21,334.89 659.81,332.49 661.41,331.69 C662.74,331.02 664.08,330.09 665.41,330.09 C666.48,330.09 667.54,331.03 668.61,331.69 C669.94,332.51 671.28,334.89 672.61,334.89 C674.21,334.89 675.81,334.44 677.41,334.09 C679.01,333.73 680.61,332.70 682.21,332.49 C685.41,332.06 688.61,331.69 691.82,331.69 C693.95,331.69 696.08,332.09 698.22,332.49 C700.48,332.90 702.74,334.09 705.00,334.89 L705.00,384.40 L634.00,384.40 Z" fill="#000" fill-opacity="0.1"/>
<path d="M634.00,380.73 C636.20,380.09 638.40,379.14 640.60,378.81 C643.27,378.42 645.94,378.01 648.60,378.01 C651.27,378.01 653.94,378.01 656.61,378.01 C658.21,378.01 659.81,380.41 661.41,381.21 C662.74,381.88 664.08,382.81 665.41,382.81 C666.48,382.81 667.54,381.87 668.61,381.21 C669.94,380.39 671.28,378.01 672.61,378.01 C674.21,378.01 675.81,378.46 677.41,378.81 C679.01,379.17 680.61,380.20 682.21,380.41 C685.41,380.84 688.61,381.21 691.82,381.21 C693.95,381.21 696.08,380.81 698.22,380.41 C700.48,380.00 702.74,378.81 705.00,378.01 L705.00,384.40 L634.00,384.40 Z" fill="#000" fill-opacity="0.1"/>
<path d="M634.00,332.17 C636.20,332.81 638.40,333.76 640.60,334.09 C643.27,334.48 645.94,334.89 648.60,334.89 C651.27,334.89 653.94,334.89 656.61,334.89 C658.21,334.89 659.81,332.49 661.41,331.69 C662.74,331.02 664.08,330.09 665.41,330.09 C666.48,330.09 667.54,331.03 668.61,331.69 C669.94,332.51 671.28,334.89 672.61,334.89 C674.21,334.89 675.81,334.44 677.41,334.09 C679.01,333.73 680.61,332.70 682.21,332.49 C685.41,332.06 688.61,331.69 691.82,331.69 C693.95,331.69 696.08,332.09 698.22,332.49 C700.48,332.90 702.74,334.09 705.00,334.89" fill="none" stroke="#a6d48f" stroke-width="1.75" stroke-opacity="1.00"/>
<path d="M634.00,380.73 C636.20,380.09 638.40,379.14 640.60,378.81 C643.27,378.42 645.94,378.01 648.60,378.01 C651.27,378.01 653.94,378.01 656.61,378.01 C658.21,378.01 659.81,380.41 661.41,381.21 C662.74,381.88 664.08,382.81 665.41,382.81 C666.48,382.81 667.54,381.87 668.61,381.21 C669.94,380.39 671.28,378.01 672.61,378.01 C674.21,378.01 675.81,378.46 677.41,378.81 C679.01,379.17 680.61,380.20 682.21,380.41 C685.41,380.84 688.61,381.21 691.82,381.21 C693.95,381.21 696.08,380.81 698.22,380.41 C700.48,380.00 702.74,378.81 705.00,378.01" fill="none" stroke="#f2b588" stroke-width="1.75"/>
</g>
<text x="669.5" y="394.0" text-anchor="middle" class="cl">Cpu 26</text>
<clipPath id="c27"><rect x="715.30" y="328.50" width="71.00" height="57.40"/></clipPath>
<g clip-path="url(#c27)">
<path d="M715.30,329.61 C738.97,329.61 762.63,329.61 786.30,329.61 L786.30,384.40 L715.30,384.40 Z" fill="#000" fill-opacity="0.1"/>
<path d="M715.30,383.29 C738.97,383.29 762.63,383.29 786.30,383.29 L786.30,384.40 L715.30,384.40 Z" fill="#000" fill-opacity="0.1"/>
<path d="M715.30,329.61 C738.97,329.61 762.63,329.61 786.30,329.61" fill="none" stroke="#a6d48f" stroke-width="1.75" stroke-opacity="0.35"/>
<path d="M715.30,383.29 C738.97,383.29 762.63,383.29 786.30,383.29" fill="none" stroke="#f2b588" stroke-width="1.75"/>
</g>
<text x="750.8" y="394.0" text-anchor="middle" class="cl">Cpu 27</text>
<clipPath id="c28"><rect x="796.60" y="328.50" width="71.00" height="57.40"/></clipPath>
<g clip-path="url(#c28)">
<path d="M796.60,329.56 C820.27,329.56 843.93,329.56 867.60,329.56 L867.60,384.40 L796.60,384.40 Z" fill="#000" fill-opacity="0.1"/>
<path d="M796.60,383.34 C820.27,383.34 843.93,383.34 867.60,383.34 L867.60,384.40 L796.60,384.40 Z" fill="#000" fill-opacity="0.1"/>
<path d="M796.60,329.56 C820.27,329.56 843.93,329.56 867.60,329.56" fill="none" stroke="#a6d48f" stroke-width="1.75" stroke-opacity="0.35"/>
<path d="M796.60,383.34 C820.27,383.34 843.93,383.34 867.60,383.34" fill="none" stroke="#f2b588" stroke-width="1.75"/>
</g>
<text x="832.1" y="394.0" text-anchor="middle" class="cl">Cpu 28</text>
<clipPath id="c29"><rect x="877.90" y="328.50" width="71.00" height="57.40"/></clipPath>
<g clip-path="url(#c29)">
<path d="M877.90,329.72 C881.07,329.88 884.24,329.94 887.41,330.21 C889.56,330.38 891.71,331.66 893.86,331.66 C896.00,331.66 898.15,329.72 900.30,329.72 C903.52,329.72 906.74,329.72 909.96,329.72 C912.11,329.72 914.26,331.33 916.41,331.33 C918.55,331.33 920.70,329.72 922.85,329.72 C931.53,329.72 940.22,329.72 948.90,329.72 L948.90,384.40 L877.90,384.40 Z" fill="#000" fill-opacity="0.1"/>
<path d="M877.90,383.18 C881.07,383.02 884.24,382.96 887.41,382.69 C889.56,382.52 891.71,381.24 893.86,381.24 C896.00,381.24 898.15,383.18 900.30,383.18 C903.52,383.18 906.74,383.18 909.96,383.18 C912.11,383.18 914.26,381.57 916.41,381.57 C918.55,381.57 920.70,383.18 922.85,383.18 C931.53,383.18 940.22,383.18 948.90,383.18 L948.90,384.40 L877.90,384.40 Z" fill="#000" fill-opacity="0.1"/>
<path d="M877.90,329.72 C881.07,329.88 884.24,329.94 887.41,330.21 C889.56,330.38 891.71,331.66 893.86,331.66 C896.00,331.66 898.15,329.72 900.30,329.72 C903.52,329.72 906.74,329.72 909.96,329.72 C912.11,329.72 914.26,331.33 916.41,331.33 C918.55,331.33 920.70,329.72 922.85,329.72 C931.53,329.72 940.22,329.72 948.90,329.72" fill="none" stroke="#a6d48f" stroke-width="1.75" stroke-opacity="0.55"/>
<path d="M877.90,383.18 C881.07,383.02 884.24,382.96 887.41,382.69 C889.56,382.52 891.71,381.24 893.86,381.24 C896.00,381.24 898.15,383.18 900.30,383.18 C903.52,383.18 906.74,383.18 909.96,383.18 C912.11,383.18 914.26,381.57 916.41,381.57 C918.55,381.57 920.70,383.18 922.85,383.18 C931.53,383.18 940.22,383.18 948.90,383.18" fill="none" stroke="#f2b588" stroke-width="1.75"/>
</g>
<text x="913.4" y="394.0" text-anchor="middle" class="cl">Cpu 29</text>
<clipPath id="c30"><rect x="146.20" y="400.00" width="71.00" height="57.40"/></clipPath>
<g clip-path="url(#c30)">
<path d="M146.20,401.29 C169.87,401.29 193.53,401.29 217.20,401.29 L217.20,455.90 L146.20,455.90 Z" fill="#000" fill-opacity="0.1"/>
<path d="M146.20,454.61 C169.87,454.61 193.53,454.61 217.20,454.61 L217.20,455.90 L146.20,455.90 Z" fill="#000" fill-opacity="0.1"/>
<path d="M146.20,401.29 C169.87,401.29 193.53,401.29 217.20,401.29" fill="none" stroke="#a6d48f" stroke-width="1.75" stroke-opacity="1.00"/>
<path d="M146.20,454.61 C169.87,454.61 193.53,454.61 217.20,454.61" fill="none" stroke="#f2b588" stroke-width="1.75"/>
</g>
<text x="181.7" y="465.5" text-anchor="middle" class="cl">Cpu 30</text>
<clipPath id="c31"><rect x="227.50" y="400.00" width="71.00" height="57.40"/></clipPath>
<g clip-path="url(#c31)">
<path d="M227.50,401.29 C243.94,401.29 260.39,401.29 276.83,401.29 C278.43,401.29 280.03,403.21 281.64,403.21 C283.77,403.21 285.90,402.24 288.04,402.09 C291.52,401.83 295.01,401.77 298.50,401.61 L298.50,455.90 L227.50,455.90 Z" fill="#000" fill-opacity="0.1"/>
<path d="M227.50,454.61 C243.94,454.61 260.39,454.61 276.83,454.61 C278.43,454.61 280.03,452.69 281.64,452.69 C283.77,452.69 285.90,453.66 288.04,453.81 C291.52,454.07 295.01,454.13 298.50,454.29 L298.50,455.90 L227.50,455.90 Z" fill="#000" fill-opacity="0.1"/>
<path d="M227.50,401.29 C243.94,401.29 260.39,401.29 276.83,401.29 C278.43,401.29 280.03,403.21 281.64,403.21 C283.77,403.21 285.90,402.24 288.04,402.09 C291.52,401.83 295.01,401.77 298.50,401.61" fill="none" stroke="#a6d48f" stroke-width="1.75" stroke-opacity="1.00"/>
<path d="M227.50,454.61 C243.94,454.61 260.39,454.61 276.83,454.61 C278.43,454.61 280.03,452.69 281.64,452.69 C283.77,452.69 285.90,453.66 288.04,453.81 C291.52,454.07 295.01,454.13 298.50,454.29" fill="none" stroke="#f2b588" stroke-width="1.75"/>
</g>
<text x="263.0" y="465.5" text-anchor="middle" class="cl">Cpu 31</text>
</svg>
</div></body></html>
